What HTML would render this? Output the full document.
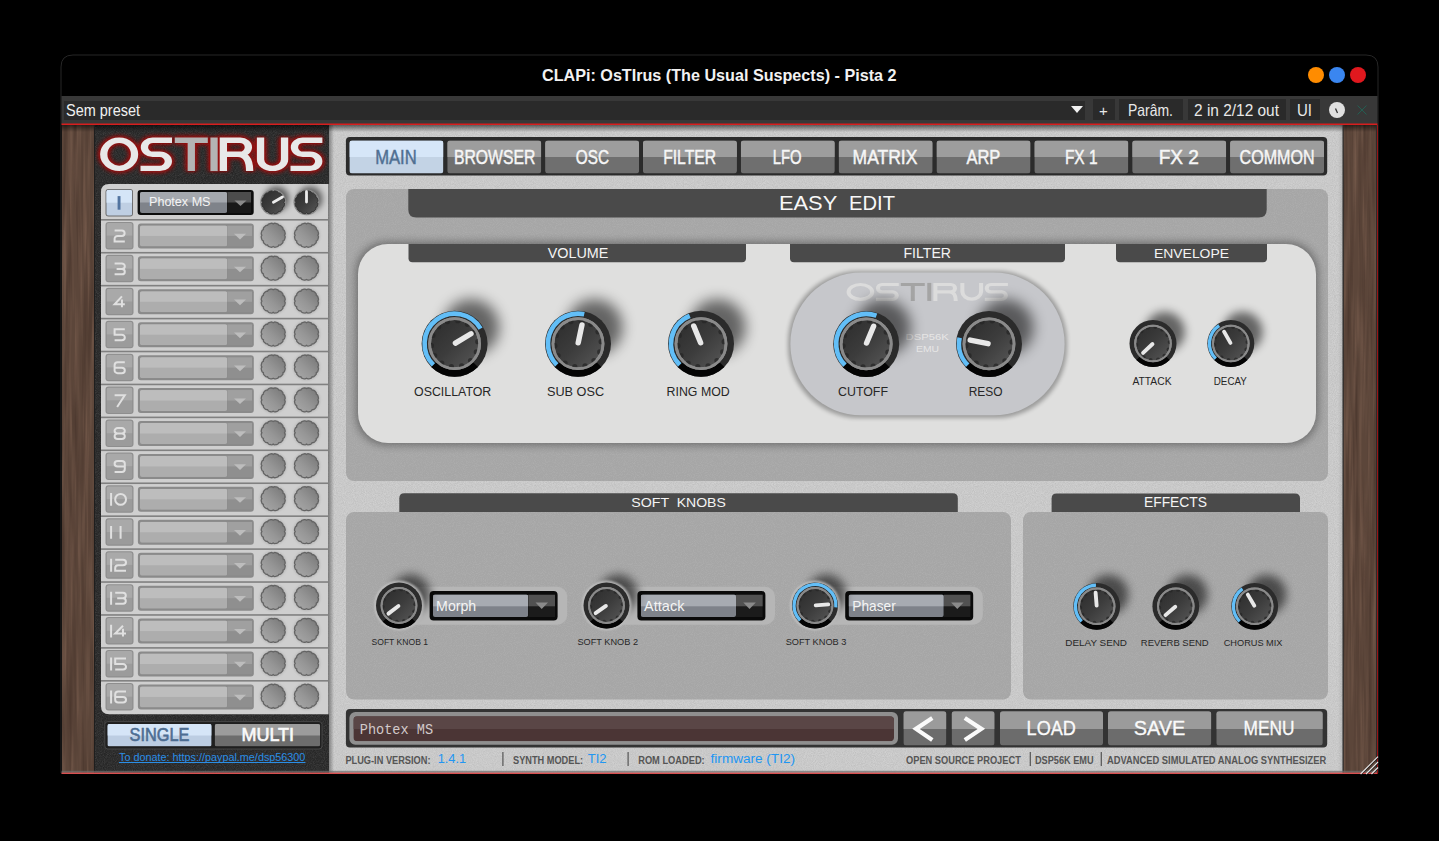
<!DOCTYPE html>
<html><head><meta charset="utf-8"><title>OsTIrus</title>
<style>html,body{margin:0;padding:0;background:#000;overflow:hidden}svg{display:block}</style>
</head><body>
<svg width="1439" height="841" viewBox="0 0 1439 841">
<defs>
<filter id="blur9" x="-100%" y="-100%" width="300%" height="300%"><feGaussianBlur stdDeviation="9"/></filter>
<filter id="blur8" x="-100%" y="-100%" width="300%" height="300%"><feGaussianBlur stdDeviation="8"/></filter>
<filter id="blur7" x="-100%" y="-100%" width="300%" height="300%"><feGaussianBlur stdDeviation="7"/></filter>
<filter id="blur5" x="-100%" y="-100%" width="300%" height="300%"><feGaussianBlur stdDeviation="5"/></filter>
<filter id="blur6" x="-100%" y="-100%" width="300%" height="300%"><feGaussianBlur stdDeviation="6"/></filter>
<filter id="blur4" x="-100%" y="-100%" width="300%" height="300%"><feGaussianBlur stdDeviation="4"/></filter>
<filter id="blur3" x="-100%" y="-100%" width="300%" height="300%"><feGaussianBlur stdDeviation="3"/></filter>
<filter id="blur2" x="-50%" y="-50%" width="200%" height="200%"><feGaussianBlur stdDeviation="2"/></filter>
<filter id="blur1" x="-50%" y="-50%" width="200%" height="200%"><feGaussianBlur stdDeviation="1"/></filter>
<filter id="blur15" x="-50%" y="-50%" width="200%" height="200%"><feGaussianBlur stdDeviation="1.5"/></filter>
<linearGradient id="face" x1="0" y1="0" x2="1" y2="1">
  <stop offset="0" stop-color="#2c2c2c"/><stop offset="0.5" stop-color="#3c3c3c"/><stop offset="1" stop-color="#585858"/>
</linearGradient>
<linearGradient id="topshade" x1="0" y1="0" x2="0" y2="1"><stop offset="0" stop-color="#000" stop-opacity="0.55"/><stop offset="1" stop-color="#000" stop-opacity="0"/></linearGradient>
<linearGradient id="leftshade" x1="0" y1="0" x2="1" y2="0"><stop offset="0" stop-color="#000" stop-opacity="0.35"/><stop offset="1" stop-color="#000" stop-opacity="0"/></linearGradient>
<linearGradient id="rightshade" x1="1" y1="0" x2="0" y2="0"><stop offset="0" stop-color="#000" stop-opacity="0.1"/><stop offset="1" stop-color="#000" stop-opacity="0"/></linearGradient>
<linearGradient id="faceG" x1="1" y1="0" x2="0" y2="1">
  <stop offset="0" stop-color="#747474"/><stop offset="0.55" stop-color="#969696"/><stop offset="1" stop-color="#aaaaaa"/>
</linearGradient>
<filter id="noise" x="0" y="0" width="100%" height="100%" color-interpolation-filters="sRGB"><feTurbulence type="fractalNoise" baseFrequency="1.1" numOctaves="1" seed="3"/><feColorMatrix type="matrix" values="0 0 0 0 0  0 0 0 0 0  0 0 0 0 0  1.8 0 0 0 -0.65"/></filter>
<filter id="noiseW" x="0" y="0" width="100%" height="100%" color-interpolation-filters="sRGB"><feTurbulence type="fractalNoise" baseFrequency="1.1" numOctaves="1" seed="5"/><feColorMatrix type="matrix" values="0 0 0 0 1  0 0 0 0 1  0 0 0 0 1  1.8 0 0 0 -0.75"/></filter>
<filter id="wood" x="0" y="0" width="100%" height="100%" color-interpolation-filters="sRGB"><feTurbulence type="fractalNoise" baseFrequency="0.22 0.008" numOctaves="3" seed="7"/><feColorMatrix type="matrix" values="0 0 0 0 0.24  0 0 0 0 0.17  0 0 0 0 0.14  1.3 0 0 0 -0.55"/></filter>
<filter id="woodL" x="0" y="0" width="100%" height="100%" color-interpolation-filters="sRGB"><feTurbulence type="fractalNoise" baseFrequency="0.3 0.01" numOctaves="2" seed="11"/><feColorMatrix type="matrix" values="0 0 0 0 0.47  0 0 0 0 0.36  0 0 0 0 0.30  1.9 0 0 0 -0.8"/></filter>
</defs>
<path d="M61,773 L61,67 Q61,55 73,55 L1366,55 Q1378,55 1378,67 L1378,773 Z" fill="#000" stroke="#262626" stroke-width="1"/>
<text x="542.0" y="80.6" font-family="Liberation Sans" font-size="16.57" font-weight="bold" fill="#f2f2f2" text-anchor="start" textLength="354.5" lengthAdjust="spacingAndGlyphs" >CLAPi: OsTIrus (The Usual Suspects) - Pista 2</text>
<circle cx="1316" cy="75" r="8" fill="#ff8c00"/>
<circle cx="1337" cy="75" r="8" fill="#3a86f0"/>
<circle cx="1358" cy="75" r="8" fill="#e0181e"/>
<rect x="61.50" y="96.00" width="1316.00" height="28.00" rx="0" fill="#383838" />
<rect x="64.00" y="101.00" width="1021.00" height="19.00" rx="0" fill="#2a2a2a" />
<text x="66.0" y="115.5" font-family="Liberation Sans" font-size="15.99" font-weight="normal" fill="#f0f0f0" text-anchor="start" textLength="74.0" lengthAdjust="spacingAndGlyphs" >Sem preset</text>
<path d="M1071,106 L1083,106 L1077,113 Z" fill="#f0f0f0"/>
<rect x="1093.00" y="99.00" width="22.00" height="21.00" rx="0" fill="#2a2a2a" />
<rect x="1119.00" y="99.00" width="64.00" height="21.00" rx="0" fill="#2a2a2a" />
<rect x="1188.00" y="99.00" width="98.00" height="21.00" rx="0" fill="#2a2a2a" />
<rect x="1290.00" y="99.00" width="30.00" height="21.00" rx="0" fill="#2a2a2a" />
<text x="1103.5" y="116.0" font-family="Liberation Sans" font-size="15.00" font-weight="normal" fill="#e8e8e8" text-anchor="middle" >+</text>
<text x="1128.0" y="115.5" font-family="Liberation Sans" font-size="16.72" font-weight="normal" fill="#e8e8e8" text-anchor="start" textLength="45.0" lengthAdjust="spacingAndGlyphs" >Parâm.</text>
<text x="1194.0" y="115.5" font-family="Liberation Sans" font-size="16.72" font-weight="normal" fill="#e8e8e8" text-anchor="start" textLength="85.0" lengthAdjust="spacingAndGlyphs" >2 in 2/12 out</text>
<text x="1297.0" y="115.5" font-family="Liberation Sans" font-size="16.72" font-weight="normal" fill="#e8e8e8" text-anchor="start" textLength="15.0" lengthAdjust="spacingAndGlyphs" >UI</text>
<circle cx="1337" cy="110" r="8" fill="#e0e0e0"/>
<path d="M1335.5,108.5 L1337.5,113" stroke="#333" stroke-width="1.3"/>
<path d="M1357.5,105.5 L1366.5,114.5 M1366.5,105.5 L1357.5,114.5" stroke="#235e52" stroke-width="1"/>
<rect x="61.50" y="123.50" width="1316.00" height="1.50" rx="0" fill="#d81e1e" />
<rect x="62.00" y="125.00" width="1315.00" height="648.00" rx="0" fill="#cbcbcb" />
<rect x="330.00" y="125.00" width="1013.00" height="648.00" rx="0" fill="#000" filter="url(#noise)" opacity="0.07"/>
<rect x="330.00" y="125.00" width="1013.00" height="648.00" rx="0" fill="#fff" filter="url(#noiseW)" opacity="0.2"/>
<rect x="62.00" y="125.00" width="34.00" height="648.00" rx="0" fill="#5c463a" />
<rect x="62.00" y="125.00" width="34.00" height="648.00" rx="0" fill="#000" filter="url(#woodL)"/>
<rect x="62.00" y="125.00" width="34.00" height="648.00" rx="0" fill="#000" filter="url(#wood)"/>
<rect x="1343.00" y="125.00" width="34.00" height="648.00" rx="0" fill="#5c463a" />
<rect x="1343.00" y="125.00" width="34.00" height="648.00" rx="0" fill="#000" filter="url(#woodL)"/>
<rect x="1343.00" y="125.00" width="34.00" height="648.00" rx="0" fill="#000" filter="url(#wood)"/>
<rect x="94.50" y="125.00" width="234.50" height="648.00" rx="0" fill="#2e2e2e" />
<rect x="94.50" y="125.00" width="234.50" height="648.00" rx="0" fill="#000" filter="url(#noise)" opacity="0.3"/>
<rect x="94.50" y="125.00" width="234.50" height="648.00" rx="0" fill="#fff" filter="url(#noiseW)" opacity="0.12"/>
<rect x="62" y="125" width="1315" height="7" fill="url(#topshade)"/>
<rect x="329" y="125" width="5" height="648" fill="url(#leftshade)"/>
<rect x="1338" y="125" width="5" height="648" fill="url(#rightshade)"/>
<g filter="url(#blur2)" opacity="0.85"><g transform="translate(0,137.50) scale(1,0.74)" stroke="#b01010" stroke-width="11.8" fill="none"><ellipse cx="119.15" cy="22.70" rx="15.40" ry="19.05"/><path d="M172.00,3.65 H152.72 A8.57,9.53 0 0 0 152.72,22.70 H159.78 A8.57,9.53 0 0 1 159.78,41.76 H140.50"/><path d="M223.35,45.41 V3.65 H240.08 A8.57,9.53 0 0 1 240.08,22.70 H223.35 M238.08,22.70 Q249.65,22.70 249.65,45.41"/><path d="M260.55,0.00 V29.76 A12.00,12.00 0 0 0 284.55,29.76 V0.00"/><path d="M322.40,3.65 H302.72 A8.57,9.53 0 0 0 302.72,22.70 H310.18 A8.57,9.53 0 0 1 310.18,41.76 H290.50"/><path d="M174.80,3.65 H207.80 M191.30,0.00 V45.41"/><path d="M214.05,0.00 V45.41"/></g></g>
<g filter="url(#blur1)" opacity="0.85"><g transform="translate(0,137.50) scale(1,0.74)" stroke="#900d0d" stroke-width="8.9" fill="none"><ellipse cx="119.15" cy="22.70" rx="15.40" ry="19.05"/><path d="M172.00,3.65 H152.72 A8.57,9.53 0 0 0 152.72,22.70 H159.78 A8.57,9.53 0 0 1 159.78,41.76 H140.50"/><path d="M223.35,45.41 V3.65 H240.08 A8.57,9.53 0 0 1 240.08,22.70 H223.35 M238.08,22.70 Q249.65,22.70 249.65,45.41"/><path d="M260.55,0.00 V29.76 A12.00,12.00 0 0 0 284.55,29.76 V0.00"/><path d="M322.40,3.65 H302.72 A8.57,9.53 0 0 0 302.72,22.70 H310.18 A8.57,9.53 0 0 1 310.18,41.76 H290.50"/><path d="M174.80,3.65 H207.80 M191.30,0.00 V45.41"/><path d="M214.05,0.00 V45.41"/></g></g>
<g transform="translate(0,137.50) scale(1,0.74)" stroke="#e8e8e8" stroke-width="7.3" fill="none"><ellipse cx="119.15" cy="22.70" rx="15.40" ry="19.05"/><path d="M172.00,3.65 H152.72 A8.57,9.53 0 0 0 152.72,22.70 H159.78 A8.57,9.53 0 0 1 159.78,41.76 H140.50"/><path d="M223.35,45.41 V3.65 H240.08 A8.57,9.53 0 0 1 240.08,22.70 H223.35 M238.08,22.70 Q249.65,22.70 249.65,45.41"/><path d="M260.55,0.00 V29.76 A12.00,12.00 0 0 0 284.55,29.76 V0.00"/><path d="M322.40,3.65 H302.72 A8.57,9.53 0 0 0 302.72,22.70 H310.18 A8.57,9.53 0 0 1 310.18,41.76 H290.50"/></g>
<g transform="translate(0,137.50) scale(1,0.74)" stroke="#b4b4b4" stroke-width="7.3" fill="none"><path d="M174.80,3.65 H207.80 M191.30,0.00 V45.41"/><path d="M214.05,0.00 V45.41"/></g>
<path d="M109,184 H328.5 V714.3 H109 Q101,714.3 101,706.3 V192 Q101,184 109,184 Z" fill="#cfcfcf"/>
<rect x="101.00" y="219.00" width="228.00" height="1.60" rx="0" fill="#808080" />
<rect x="105.50" y="189.00" width="27.50" height="27.50" rx="3" fill="#6a6a6a" />
<clipPath id="c1063_1898"><rect x="106.30" y="189.80" width="25.90" height="25.90" rx="2.5"/></clipPath><g clip-path="url(#c1063_1898)" ><rect x="106.30" y="189.80" width="25.90" height="25.90" fill="#bfcfe3"/><rect x="106.30" y="189.80" width="25.90" height="12.90" fill="#d5e5f7"/></g>
<rect x="117.60" y="196.10" width="2.90" height="13.60" rx="0" fill="#5274a0" />
<rect x="137.60" y="190.00" width="116.10" height="25.00" rx="3" fill="#0c0c0c" />
<clipPath id="c1400_1920"><rect x="140.00" y="192.00" width="87.20" height="21.00" rx="2"/></clipPath><g clip-path="url(#c1400_1920)" ><rect x="140.00" y="192.00" width="87.20" height="21.00" fill="#7f838a"/><rect x="140.00" y="192.00" width="87.20" height="10.50" fill="#a4a8ae"/></g>
<clipPath id="c2272_1920"><rect x="227.20" y="192.00" width="24.00" height="21.00" rx="0"/></clipPath><g clip-path="url(#c2272_1920)" ><rect x="227.20" y="192.00" width="24.00" height="21.00" fill="#191919"/><rect x="227.20" y="192.00" width="24.00" height="10.50" fill="#4c4c4c"/></g>
<path d="M234.5,200.5 H246.5 L240.5,206.0 Z" fill="#8a8a8a"/>
<text x="149.0" y="205.5" font-family="Liberation Sans" font-size="13.08" font-weight="normal" fill="#f4f4f4" text-anchor="start" textLength="61.5" lengthAdjust="spacingAndGlyphs" >Photex MS</text>
<circle cx="276.70" cy="198.80" r="12.40" fill="#000" opacity="0.55" filter="url(#blur3)"/>
<circle cx="273.2" cy="202.3" r="13.00" fill="#8a8a8a"/>
<path d="M273.20,191.80 L273.93,191.18 L274.70,190.90 L275.44,191.02 L276.18,191.19 L276.90,191.41 L277.60,191.68 L278.13,192.30 L278.45,193.21 L279.39,193.03 L280.20,193.18 L280.78,193.65 L281.33,194.17 L281.85,194.72 L282.32,195.30 L282.47,196.11 L282.29,197.05 L283.20,197.37 L283.82,197.90 L284.09,198.60 L284.31,199.32 L284.48,200.06 L284.60,200.80 L284.32,201.57 L283.70,202.30 L284.32,203.03 L284.60,203.80 L284.48,204.54 L284.31,205.28 L284.09,206.00 L283.82,206.70 L283.20,207.23 L282.29,207.55 L282.47,208.49 L282.32,209.30 L281.85,209.88 L281.33,210.43 L280.78,210.95 L280.20,211.42 L279.39,211.57 L278.45,211.39 L278.13,212.30 L277.60,212.92 L276.90,213.19 L276.18,213.41 L275.44,213.58 L274.70,213.70 L273.93,213.42 L273.20,212.80 L272.47,213.42 L271.70,213.70 L270.96,213.58 L270.22,213.41 L269.50,213.19 L268.80,212.92 L268.27,212.30 L267.95,211.39 L267.01,211.57 L266.20,211.42 L265.62,210.95 L265.07,210.43 L264.55,209.88 L264.08,209.30 L263.93,208.49 L264.11,207.55 L263.20,207.23 L262.58,206.70 L262.31,206.00 L262.09,205.28 L261.92,204.54 L261.80,203.80 L262.08,203.03 L262.70,202.30 L262.08,201.57 L261.80,200.80 L261.92,200.06 L262.09,199.32 L262.31,198.60 L262.58,197.90 L263.20,197.37 L264.11,197.05 L263.93,196.11 L264.08,195.30 L264.55,194.72 L265.07,194.17 L265.62,193.65 L266.20,193.18 L267.01,193.03 L267.95,193.21 L268.27,192.30 L268.80,191.68 L269.50,191.41 L270.22,191.19 L270.96,191.02 L271.70,190.90 L272.47,191.18 Z" fill="url(#face)" stroke="#2e2e2e" stroke-width="1"/>
<path d="M273.41,202.18 L282.44,196.97" stroke="#ececec" stroke-width="2.8" stroke-linecap="round"/>
<circle cx="310.00" cy="198.80" r="12.40" fill="#000" opacity="0.55" filter="url(#blur3)"/>
<circle cx="306.5" cy="202.3" r="13.00" fill="#8a8a8a"/>
<path d="M306.50,191.80 L307.23,191.18 L308.00,190.90 L308.74,191.02 L309.48,191.19 L310.20,191.41 L310.90,191.68 L311.43,192.30 L311.75,193.21 L312.69,193.03 L313.50,193.18 L314.08,193.65 L314.63,194.17 L315.15,194.72 L315.62,195.30 L315.77,196.11 L315.59,197.05 L316.50,197.37 L317.12,197.90 L317.39,198.60 L317.61,199.32 L317.78,200.06 L317.90,200.80 L317.62,201.57 L317.00,202.30 L317.62,203.03 L317.90,203.80 L317.78,204.54 L317.61,205.28 L317.39,206.00 L317.12,206.70 L316.50,207.23 L315.59,207.55 L315.77,208.49 L315.62,209.30 L315.15,209.88 L314.63,210.43 L314.08,210.95 L313.50,211.42 L312.69,211.57 L311.75,211.39 L311.43,212.30 L310.90,212.92 L310.20,213.19 L309.48,213.41 L308.74,213.58 L308.00,213.70 L307.23,213.42 L306.50,212.80 L305.77,213.42 L305.00,213.70 L304.26,213.58 L303.52,213.41 L302.80,213.19 L302.10,212.92 L301.57,212.30 L301.25,211.39 L300.31,211.57 L299.50,211.42 L298.92,210.95 L298.37,210.43 L297.85,209.88 L297.38,209.30 L297.23,208.49 L297.41,207.55 L296.50,207.23 L295.88,206.70 L295.61,206.00 L295.39,205.28 L295.22,204.54 L295.10,203.80 L295.38,203.03 L296.00,202.30 L295.38,201.57 L295.10,200.80 L295.22,200.06 L295.39,199.32 L295.61,198.60 L295.88,197.90 L296.50,197.37 L297.41,197.05 L297.23,196.11 L297.38,195.30 L297.85,194.72 L298.37,194.17 L298.92,193.65 L299.50,193.18 L300.31,193.03 L301.25,193.21 L301.57,192.30 L302.10,191.68 L302.80,191.41 L303.52,191.19 L304.26,191.02 L305.00,190.90 L305.77,191.18 Z" fill="url(#face)" stroke="#2e2e2e" stroke-width="1"/>
<path d="M306.50,202.05 L306.50,191.64" stroke="#ececec" stroke-width="2.8" stroke-linecap="round"/>
<rect x="101.00" y="251.93" width="228.00" height="1.60" rx="0" fill="#808080" />
<rect x="105.50" y="221.93" width="28.00" height="27.50" rx="3" fill="#8e8e8e" />
<clipPath id="c1065_2229"><rect x="106.50" y="222.93" width="26.00" height="25.50" rx="2.5"/></clipPath><g clip-path="url(#c1065_2229)" ><rect x="106.50" y="222.93" width="26.00" height="25.50" fill="#9b9b9b"/><rect x="106.50" y="222.93" width="26.00" height="12.70" fill="#a9a9a9"/></g>
<path d="M114.60,230.53 H121.80 A3.00,2.73 0 0 1 121.80,235.98 H117.60 A3.00,2.73 0 0 0 114.60,238.71 V241.43 H124.80" stroke="#e0e0e0" stroke-width="2" fill="none"/>
<rect x="137.90" y="223.43" width="115.90" height="25.00" rx="3" fill="#8a8a8a" />
<clipPath id="c1400_2254"><rect x="140.00" y="225.43" width="87.20" height="21.00" rx="2"/></clipPath><g clip-path="url(#c1400_2254)" ><rect x="140.00" y="225.43" width="87.20" height="21.00" fill="#adadad"/><rect x="140.00" y="225.43" width="87.20" height="10.50" fill="#bdbdbd"/></g>
<clipPath id="c2272_2254"><rect x="227.20" y="225.43" width="24.80" height="21.00" rx="0"/></clipPath><g clip-path="url(#c2272_2254)" ><rect x="227.20" y="225.43" width="24.80" height="21.00" fill="#8f8f8f"/><rect x="227.20" y="225.43" width="24.80" height="10.50" fill="#a0a0a0"/></g>
<path d="M234,233.73000000000002 H246 L240,239.43 Z" fill="#bdbdbd"/>
<circle cx="273.2" cy="235.23000000000002" r="13.60" fill="#b9b9b9" filter="url(#blur1)"/>
<path d="M273.20,223.93 L273.97,223.44 L274.78,223.23 L275.56,223.36 L276.33,223.54 L277.09,223.77 L277.83,224.05 L278.43,224.63 L278.85,225.44 L279.77,225.40 L280.57,225.63 L281.18,226.13 L281.76,226.67 L282.30,227.25 L282.80,227.86 L283.03,228.66 L282.99,229.58 L283.80,230.00 L284.38,230.60 L284.66,231.34 L284.89,232.10 L285.07,232.87 L285.20,233.65 L284.99,234.46 L284.50,235.23 L284.99,236.00 L285.20,236.81 L285.07,237.59 L284.89,238.36 L284.66,239.12 L284.38,239.86 L283.80,240.46 L282.99,240.88 L283.03,241.80 L282.80,242.60 L282.30,243.21 L281.76,243.79 L281.18,244.33 L280.57,244.83 L279.77,245.06 L278.85,245.02 L278.43,245.83 L277.83,246.41 L277.09,246.69 L276.33,246.92 L275.56,247.10 L274.78,247.23 L273.97,247.02 L273.20,246.53 L272.43,247.02 L271.62,247.23 L270.84,247.10 L270.07,246.92 L269.31,246.69 L268.57,246.41 L267.97,245.83 L267.55,245.02 L266.63,245.06 L265.83,244.83 L265.22,244.33 L264.64,243.79 L264.10,243.21 L263.60,242.60 L263.37,241.80 L263.41,240.88 L262.60,240.46 L262.02,239.86 L261.74,239.12 L261.51,238.36 L261.33,237.59 L261.20,236.81 L261.41,236.00 L261.90,235.23 L261.41,234.46 L261.20,233.65 L261.33,232.87 L261.51,232.10 L261.74,231.34 L262.02,230.60 L262.60,230.00 L263.41,229.58 L263.37,228.66 L263.60,227.86 L264.10,227.25 L264.64,226.67 L265.22,226.13 L265.83,225.63 L266.63,225.40 L267.55,225.44 L267.97,224.63 L268.57,224.05 L269.31,223.77 L270.07,223.54 L270.84,223.36 L271.62,223.23 L272.43,223.44 Z" fill="url(#faceG)" stroke="#646464" stroke-width="1.3"/>
<circle cx="306.5" cy="235.23000000000002" r="13.60" fill="#b9b9b9" filter="url(#blur1)"/>
<path d="M306.50,223.93 L307.27,223.44 L308.08,223.23 L308.86,223.36 L309.63,223.54 L310.39,223.77 L311.13,224.05 L311.73,224.63 L312.15,225.44 L313.07,225.40 L313.87,225.63 L314.48,226.13 L315.06,226.67 L315.60,227.25 L316.10,227.86 L316.33,228.66 L316.29,229.58 L317.10,230.00 L317.68,230.60 L317.96,231.34 L318.19,232.10 L318.37,232.87 L318.50,233.65 L318.29,234.46 L317.80,235.23 L318.29,236.00 L318.50,236.81 L318.37,237.59 L318.19,238.36 L317.96,239.12 L317.68,239.86 L317.10,240.46 L316.29,240.88 L316.33,241.80 L316.10,242.60 L315.60,243.21 L315.06,243.79 L314.48,244.33 L313.87,244.83 L313.07,245.06 L312.15,245.02 L311.73,245.83 L311.13,246.41 L310.39,246.69 L309.63,246.92 L308.86,247.10 L308.08,247.23 L307.27,247.02 L306.50,246.53 L305.73,247.02 L304.92,247.23 L304.14,247.10 L303.37,246.92 L302.61,246.69 L301.87,246.41 L301.27,245.83 L300.85,245.02 L299.93,245.06 L299.13,244.83 L298.52,244.33 L297.94,243.79 L297.40,243.21 L296.90,242.60 L296.67,241.80 L296.71,240.88 L295.90,240.46 L295.32,239.86 L295.04,239.12 L294.81,238.36 L294.63,237.59 L294.50,236.81 L294.71,236.00 L295.20,235.23 L294.71,234.46 L294.50,233.65 L294.63,232.87 L294.81,232.10 L295.04,231.34 L295.32,230.60 L295.90,230.00 L296.71,229.58 L296.67,228.66 L296.90,227.86 L297.40,227.25 L297.94,226.67 L298.52,226.13 L299.13,225.63 L299.93,225.40 L300.85,225.44 L301.27,224.63 L301.87,224.05 L302.61,223.77 L303.37,223.54 L304.14,223.36 L304.92,223.23 L305.73,223.44 Z" fill="url(#faceG)" stroke="#646464" stroke-width="1.3"/>
<rect x="101.00" y="284.86" width="228.00" height="1.60" rx="0" fill="#808080" />
<rect x="105.50" y="254.86" width="28.00" height="27.50" rx="3" fill="#8e8e8e" />
<clipPath id="c1065_2558"><rect x="106.50" y="255.86" width="26.00" height="25.50" rx="2.5"/></clipPath><g clip-path="url(#c1065_2558)" ><rect x="106.50" y="255.86" width="26.00" height="25.50" fill="#9b9b9b"/><rect x="106.50" y="255.86" width="26.00" height="12.70" fill="#a9a9a9"/></g>
<path d="M114.60,263.46 H121.80 A3.00,2.72 0 0 1 121.80,268.91 H116.60 M121.80,268.91 A3.00,2.72 0 0 1 121.80,274.36 H114.60" stroke="#e0e0e0" stroke-width="2" fill="none"/>
<rect x="137.90" y="256.36" width="115.90" height="25.00" rx="3" fill="#8a8a8a" />
<clipPath id="c1400_2583"><rect x="140.00" y="258.36" width="87.20" height="21.00" rx="2"/></clipPath><g clip-path="url(#c1400_2583)" ><rect x="140.00" y="258.36" width="87.20" height="21.00" fill="#adadad"/><rect x="140.00" y="258.36" width="87.20" height="10.50" fill="#bdbdbd"/></g>
<clipPath id="c2272_2583"><rect x="227.20" y="258.36" width="24.80" height="21.00" rx="0"/></clipPath><g clip-path="url(#c2272_2583)" ><rect x="227.20" y="258.36" width="24.80" height="21.00" fill="#8f8f8f"/><rect x="227.20" y="258.36" width="24.80" height="10.50" fill="#a0a0a0"/></g>
<path d="M234,266.66 H246 L240,272.36 Z" fill="#bdbdbd"/>
<circle cx="273.2" cy="268.16" r="13.60" fill="#b9b9b9" filter="url(#blur1)"/>
<path d="M273.20,256.86 L273.97,256.37 L274.78,256.16 L275.56,256.29 L276.33,256.47 L277.09,256.70 L277.83,256.98 L278.43,257.56 L278.85,258.37 L279.77,258.33 L280.57,258.56 L281.18,259.06 L281.76,259.60 L282.30,260.18 L282.80,260.79 L283.03,261.59 L282.99,262.51 L283.80,262.93 L284.38,263.53 L284.66,264.27 L284.89,265.03 L285.07,265.80 L285.20,266.58 L284.99,267.39 L284.50,268.16 L284.99,268.93 L285.20,269.74 L285.07,270.52 L284.89,271.29 L284.66,272.05 L284.38,272.79 L283.80,273.39 L282.99,273.81 L283.03,274.73 L282.80,275.53 L282.30,276.14 L281.76,276.72 L281.18,277.26 L280.57,277.76 L279.77,277.99 L278.85,277.95 L278.43,278.76 L277.83,279.34 L277.09,279.62 L276.33,279.85 L275.56,280.03 L274.78,280.16 L273.97,279.95 L273.20,279.46 L272.43,279.95 L271.62,280.16 L270.84,280.03 L270.07,279.85 L269.31,279.62 L268.57,279.34 L267.97,278.76 L267.55,277.95 L266.63,277.99 L265.83,277.76 L265.22,277.26 L264.64,276.72 L264.10,276.14 L263.60,275.53 L263.37,274.73 L263.41,273.81 L262.60,273.39 L262.02,272.79 L261.74,272.05 L261.51,271.29 L261.33,270.52 L261.20,269.74 L261.41,268.93 L261.90,268.16 L261.41,267.39 L261.20,266.58 L261.33,265.80 L261.51,265.03 L261.74,264.27 L262.02,263.53 L262.60,262.93 L263.41,262.51 L263.37,261.59 L263.60,260.79 L264.10,260.18 L264.64,259.60 L265.22,259.06 L265.83,258.56 L266.63,258.33 L267.55,258.37 L267.97,257.56 L268.57,256.98 L269.31,256.70 L270.07,256.47 L270.84,256.29 L271.62,256.16 L272.43,256.37 Z" fill="url(#faceG)" stroke="#646464" stroke-width="1.3"/>
<circle cx="306.5" cy="268.16" r="13.60" fill="#b9b9b9" filter="url(#blur1)"/>
<path d="M306.50,256.86 L307.27,256.37 L308.08,256.16 L308.86,256.29 L309.63,256.47 L310.39,256.70 L311.13,256.98 L311.73,257.56 L312.15,258.37 L313.07,258.33 L313.87,258.56 L314.48,259.06 L315.06,259.60 L315.60,260.18 L316.10,260.79 L316.33,261.59 L316.29,262.51 L317.10,262.93 L317.68,263.53 L317.96,264.27 L318.19,265.03 L318.37,265.80 L318.50,266.58 L318.29,267.39 L317.80,268.16 L318.29,268.93 L318.50,269.74 L318.37,270.52 L318.19,271.29 L317.96,272.05 L317.68,272.79 L317.10,273.39 L316.29,273.81 L316.33,274.73 L316.10,275.53 L315.60,276.14 L315.06,276.72 L314.48,277.26 L313.87,277.76 L313.07,277.99 L312.15,277.95 L311.73,278.76 L311.13,279.34 L310.39,279.62 L309.63,279.85 L308.86,280.03 L308.08,280.16 L307.27,279.95 L306.50,279.46 L305.73,279.95 L304.92,280.16 L304.14,280.03 L303.37,279.85 L302.61,279.62 L301.87,279.34 L301.27,278.76 L300.85,277.95 L299.93,277.99 L299.13,277.76 L298.52,277.26 L297.94,276.72 L297.40,276.14 L296.90,275.53 L296.67,274.73 L296.71,273.81 L295.90,273.39 L295.32,272.79 L295.04,272.05 L294.81,271.29 L294.63,270.52 L294.50,269.74 L294.71,268.93 L295.20,268.16 L294.71,267.39 L294.50,266.58 L294.63,265.80 L294.81,265.03 L295.04,264.27 L295.32,263.53 L295.90,262.93 L296.71,262.51 L296.67,261.59 L296.90,260.79 L297.40,260.18 L297.94,259.60 L298.52,259.06 L299.13,258.56 L299.93,258.33 L300.85,258.37 L301.27,257.56 L301.87,256.98 L302.61,256.70 L303.37,256.47 L304.14,256.29 L304.92,256.16 L305.73,256.37 Z" fill="url(#faceG)" stroke="#646464" stroke-width="1.3"/>
<rect x="101.00" y="317.79" width="228.00" height="1.60" rx="0" fill="#808080" />
<rect x="105.50" y="287.79" width="28.00" height="27.50" rx="3" fill="#8e8e8e" />
<clipPath id="c1065_2887"><rect x="106.50" y="288.79" width="26.00" height="25.50" rx="2.5"/></clipPath><g clip-path="url(#c1065_2887)" ><rect x="106.50" y="288.79" width="26.00" height="25.50" fill="#9b9b9b"/><rect x="106.50" y="288.79" width="26.00" height="12.70" fill="#a9a9a9"/></g>
<path d="M121.94,296.39 L114.60,304.29 H124.80 M121.94,299.39 V307.29" stroke="#e0e0e0" stroke-width="2" fill="none"/>
<rect x="137.90" y="289.29" width="115.90" height="25.00" rx="3" fill="#8a8a8a" />
<clipPath id="c1400_2912"><rect x="140.00" y="291.29" width="87.20" height="21.00" rx="2"/></clipPath><g clip-path="url(#c1400_2912)" ><rect x="140.00" y="291.29" width="87.20" height="21.00" fill="#adadad"/><rect x="140.00" y="291.29" width="87.20" height="10.50" fill="#bdbdbd"/></g>
<clipPath id="c2272_2912"><rect x="227.20" y="291.29" width="24.80" height="21.00" rx="0"/></clipPath><g clip-path="url(#c2272_2912)" ><rect x="227.20" y="291.29" width="24.80" height="21.00" fill="#8f8f8f"/><rect x="227.20" y="291.29" width="24.80" height="10.50" fill="#a0a0a0"/></g>
<path d="M234,299.59 H246 L240,305.28999999999996 Z" fill="#bdbdbd"/>
<circle cx="273.2" cy="301.09" r="13.60" fill="#b9b9b9" filter="url(#blur1)"/>
<path d="M273.20,289.79 L273.97,289.30 L274.78,289.09 L275.56,289.22 L276.33,289.40 L277.09,289.63 L277.83,289.91 L278.43,290.49 L278.85,291.30 L279.77,291.26 L280.57,291.49 L281.18,291.99 L281.76,292.53 L282.30,293.11 L282.80,293.72 L283.03,294.52 L282.99,295.44 L283.80,295.86 L284.38,296.46 L284.66,297.20 L284.89,297.96 L285.07,298.73 L285.20,299.51 L284.99,300.32 L284.50,301.09 L284.99,301.86 L285.20,302.67 L285.07,303.45 L284.89,304.22 L284.66,304.98 L284.38,305.72 L283.80,306.32 L282.99,306.74 L283.03,307.66 L282.80,308.46 L282.30,309.07 L281.76,309.65 L281.18,310.19 L280.57,310.69 L279.77,310.92 L278.85,310.88 L278.43,311.69 L277.83,312.27 L277.09,312.55 L276.33,312.78 L275.56,312.96 L274.78,313.09 L273.97,312.88 L273.20,312.39 L272.43,312.88 L271.62,313.09 L270.84,312.96 L270.07,312.78 L269.31,312.55 L268.57,312.27 L267.97,311.69 L267.55,310.88 L266.63,310.92 L265.83,310.69 L265.22,310.19 L264.64,309.65 L264.10,309.07 L263.60,308.46 L263.37,307.66 L263.41,306.74 L262.60,306.32 L262.02,305.72 L261.74,304.98 L261.51,304.22 L261.33,303.45 L261.20,302.67 L261.41,301.86 L261.90,301.09 L261.41,300.32 L261.20,299.51 L261.33,298.73 L261.51,297.96 L261.74,297.20 L262.02,296.46 L262.60,295.86 L263.41,295.44 L263.37,294.52 L263.60,293.72 L264.10,293.11 L264.64,292.53 L265.22,291.99 L265.83,291.49 L266.63,291.26 L267.55,291.30 L267.97,290.49 L268.57,289.91 L269.31,289.63 L270.07,289.40 L270.84,289.22 L271.62,289.09 L272.43,289.30 Z" fill="url(#faceG)" stroke="#646464" stroke-width="1.3"/>
<circle cx="306.5" cy="301.09" r="13.60" fill="#b9b9b9" filter="url(#blur1)"/>
<path d="M306.50,289.79 L307.27,289.30 L308.08,289.09 L308.86,289.22 L309.63,289.40 L310.39,289.63 L311.13,289.91 L311.73,290.49 L312.15,291.30 L313.07,291.26 L313.87,291.49 L314.48,291.99 L315.06,292.53 L315.60,293.11 L316.10,293.72 L316.33,294.52 L316.29,295.44 L317.10,295.86 L317.68,296.46 L317.96,297.20 L318.19,297.96 L318.37,298.73 L318.50,299.51 L318.29,300.32 L317.80,301.09 L318.29,301.86 L318.50,302.67 L318.37,303.45 L318.19,304.22 L317.96,304.98 L317.68,305.72 L317.10,306.32 L316.29,306.74 L316.33,307.66 L316.10,308.46 L315.60,309.07 L315.06,309.65 L314.48,310.19 L313.87,310.69 L313.07,310.92 L312.15,310.88 L311.73,311.69 L311.13,312.27 L310.39,312.55 L309.63,312.78 L308.86,312.96 L308.08,313.09 L307.27,312.88 L306.50,312.39 L305.73,312.88 L304.92,313.09 L304.14,312.96 L303.37,312.78 L302.61,312.55 L301.87,312.27 L301.27,311.69 L300.85,310.88 L299.93,310.92 L299.13,310.69 L298.52,310.19 L297.94,309.65 L297.40,309.07 L296.90,308.46 L296.67,307.66 L296.71,306.74 L295.90,306.32 L295.32,305.72 L295.04,304.98 L294.81,304.22 L294.63,303.45 L294.50,302.67 L294.71,301.86 L295.20,301.09 L294.71,300.32 L294.50,299.51 L294.63,298.73 L294.81,297.96 L295.04,297.20 L295.32,296.46 L295.90,295.86 L296.71,295.44 L296.67,294.52 L296.90,293.72 L297.40,293.11 L297.94,292.53 L298.52,291.99 L299.13,291.49 L299.93,291.26 L300.85,291.30 L301.27,290.49 L301.87,289.91 L302.61,289.63 L303.37,289.40 L304.14,289.22 L304.92,289.09 L305.73,289.30 Z" fill="url(#faceG)" stroke="#646464" stroke-width="1.3"/>
<rect x="101.00" y="350.72" width="228.00" height="1.60" rx="0" fill="#808080" />
<rect x="105.50" y="320.72" width="28.00" height="27.50" rx="3" fill="#8e8e8e" />
<clipPath id="c1065_3217"><rect x="106.50" y="321.72" width="26.00" height="25.50" rx="2.5"/></clipPath><g clip-path="url(#c1065_3217)" ><rect x="106.50" y="321.72" width="26.00" height="25.50" fill="#9b9b9b"/><rect x="106.50" y="321.72" width="26.00" height="12.70" fill="#a9a9a9"/></g>
<path d="M124.80,329.32 H114.60 V334.77 H121.80 A3.00,2.72 0 0 1 121.80,340.22 H114.60" stroke="#e0e0e0" stroke-width="2" fill="none"/>
<rect x="137.90" y="322.22" width="115.90" height="25.00" rx="3" fill="#8a8a8a" />
<clipPath id="c1400_3242"><rect x="140.00" y="324.22" width="87.20" height="21.00" rx="2"/></clipPath><g clip-path="url(#c1400_3242)" ><rect x="140.00" y="324.22" width="87.20" height="21.00" fill="#adadad"/><rect x="140.00" y="324.22" width="87.20" height="10.50" fill="#bdbdbd"/></g>
<clipPath id="c2272_3242"><rect x="227.20" y="324.22" width="24.80" height="21.00" rx="0"/></clipPath><g clip-path="url(#c2272_3242)" ><rect x="227.20" y="324.22" width="24.80" height="21.00" fill="#8f8f8f"/><rect x="227.20" y="324.22" width="24.80" height="10.50" fill="#a0a0a0"/></g>
<path d="M234,332.52000000000004 H246 L240,338.22 Z" fill="#bdbdbd"/>
<circle cx="273.2" cy="334.02000000000004" r="13.60" fill="#b9b9b9" filter="url(#blur1)"/>
<path d="M273.20,322.72 L273.97,322.23 L274.78,322.02 L275.56,322.15 L276.33,322.33 L277.09,322.56 L277.83,322.84 L278.43,323.42 L278.85,324.23 L279.77,324.19 L280.57,324.42 L281.18,324.92 L281.76,325.46 L282.30,326.04 L282.80,326.65 L283.03,327.45 L282.99,328.37 L283.80,328.79 L284.38,329.39 L284.66,330.13 L284.89,330.89 L285.07,331.66 L285.20,332.44 L284.99,333.25 L284.50,334.02 L284.99,334.79 L285.20,335.60 L285.07,336.38 L284.89,337.15 L284.66,337.91 L284.38,338.65 L283.80,339.25 L282.99,339.67 L283.03,340.59 L282.80,341.39 L282.30,342.00 L281.76,342.58 L281.18,343.12 L280.57,343.62 L279.77,343.85 L278.85,343.81 L278.43,344.62 L277.83,345.20 L277.09,345.48 L276.33,345.71 L275.56,345.89 L274.78,346.02 L273.97,345.81 L273.20,345.32 L272.43,345.81 L271.62,346.02 L270.84,345.89 L270.07,345.71 L269.31,345.48 L268.57,345.20 L267.97,344.62 L267.55,343.81 L266.63,343.85 L265.83,343.62 L265.22,343.12 L264.64,342.58 L264.10,342.00 L263.60,341.39 L263.37,340.59 L263.41,339.67 L262.60,339.25 L262.02,338.65 L261.74,337.91 L261.51,337.15 L261.33,336.38 L261.20,335.60 L261.41,334.79 L261.90,334.02 L261.41,333.25 L261.20,332.44 L261.33,331.66 L261.51,330.89 L261.74,330.13 L262.02,329.39 L262.60,328.79 L263.41,328.37 L263.37,327.45 L263.60,326.65 L264.10,326.04 L264.64,325.46 L265.22,324.92 L265.83,324.42 L266.63,324.19 L267.55,324.23 L267.97,323.42 L268.57,322.84 L269.31,322.56 L270.07,322.33 L270.84,322.15 L271.62,322.02 L272.43,322.23 Z" fill="url(#faceG)" stroke="#646464" stroke-width="1.3"/>
<circle cx="306.5" cy="334.02000000000004" r="13.60" fill="#b9b9b9" filter="url(#blur1)"/>
<path d="M306.50,322.72 L307.27,322.23 L308.08,322.02 L308.86,322.15 L309.63,322.33 L310.39,322.56 L311.13,322.84 L311.73,323.42 L312.15,324.23 L313.07,324.19 L313.87,324.42 L314.48,324.92 L315.06,325.46 L315.60,326.04 L316.10,326.65 L316.33,327.45 L316.29,328.37 L317.10,328.79 L317.68,329.39 L317.96,330.13 L318.19,330.89 L318.37,331.66 L318.50,332.44 L318.29,333.25 L317.80,334.02 L318.29,334.79 L318.50,335.60 L318.37,336.38 L318.19,337.15 L317.96,337.91 L317.68,338.65 L317.10,339.25 L316.29,339.67 L316.33,340.59 L316.10,341.39 L315.60,342.00 L315.06,342.58 L314.48,343.12 L313.87,343.62 L313.07,343.85 L312.15,343.81 L311.73,344.62 L311.13,345.20 L310.39,345.48 L309.63,345.71 L308.86,345.89 L308.08,346.02 L307.27,345.81 L306.50,345.32 L305.73,345.81 L304.92,346.02 L304.14,345.89 L303.37,345.71 L302.61,345.48 L301.87,345.20 L301.27,344.62 L300.85,343.81 L299.93,343.85 L299.13,343.62 L298.52,343.12 L297.94,342.58 L297.40,342.00 L296.90,341.39 L296.67,340.59 L296.71,339.67 L295.90,339.25 L295.32,338.65 L295.04,337.91 L294.81,337.15 L294.63,336.38 L294.50,335.60 L294.71,334.79 L295.20,334.02 L294.71,333.25 L294.50,332.44 L294.63,331.66 L294.81,330.89 L295.04,330.13 L295.32,329.39 L295.90,328.79 L296.71,328.37 L296.67,327.45 L296.90,326.65 L297.40,326.04 L297.94,325.46 L298.52,324.92 L299.13,324.42 L299.93,324.19 L300.85,324.23 L301.27,323.42 L301.87,322.84 L302.61,322.56 L303.37,322.33 L304.14,322.15 L304.92,322.02 L305.73,322.23 Z" fill="url(#faceG)" stroke="#646464" stroke-width="1.3"/>
<rect x="101.00" y="383.65" width="228.00" height="1.60" rx="0" fill="#808080" />
<rect x="105.50" y="353.65" width="28.00" height="27.50" rx="3" fill="#8e8e8e" />
<clipPath id="c1065_3546"><rect x="106.50" y="354.65" width="26.00" height="25.50" rx="2.5"/></clipPath><g clip-path="url(#c1065_3546)" ><rect x="106.50" y="354.65" width="26.00" height="25.50" fill="#9b9b9b"/><rect x="106.50" y="354.65" width="26.00" height="12.70" fill="#a9a9a9"/></g>
<path d="M124.80,362.25 H117.60 A3.00,3.00 0 0 0 114.60,365.25 V370.42 A3.00,2.72 0 0 0 117.60,373.15 H121.80 A3.00,2.72 0 0 0 121.80,367.70 H114.60" stroke="#e0e0e0" stroke-width="2" fill="none"/>
<rect x="137.90" y="355.15" width="115.90" height="25.00" rx="3" fill="#8a8a8a" />
<clipPath id="c1400_3571"><rect x="140.00" y="357.15" width="87.20" height="21.00" rx="2"/></clipPath><g clip-path="url(#c1400_3571)" ><rect x="140.00" y="357.15" width="87.20" height="21.00" fill="#adadad"/><rect x="140.00" y="357.15" width="87.20" height="10.50" fill="#bdbdbd"/></g>
<clipPath id="c2272_3571"><rect x="227.20" y="357.15" width="24.80" height="21.00" rx="0"/></clipPath><g clip-path="url(#c2272_3571)" ><rect x="227.20" y="357.15" width="24.80" height="21.00" fill="#8f8f8f"/><rect x="227.20" y="357.15" width="24.80" height="10.50" fill="#a0a0a0"/></g>
<path d="M234,365.45 H246 L240,371.15 Z" fill="#bdbdbd"/>
<circle cx="273.2" cy="366.95" r="13.60" fill="#b9b9b9" filter="url(#blur1)"/>
<path d="M273.20,355.65 L273.97,355.16 L274.78,354.95 L275.56,355.08 L276.33,355.26 L277.09,355.49 L277.83,355.77 L278.43,356.35 L278.85,357.16 L279.77,357.12 L280.57,357.35 L281.18,357.85 L281.76,358.39 L282.30,358.97 L282.80,359.58 L283.03,360.38 L282.99,361.30 L283.80,361.72 L284.38,362.32 L284.66,363.06 L284.89,363.82 L285.07,364.59 L285.20,365.37 L284.99,366.18 L284.50,366.95 L284.99,367.72 L285.20,368.53 L285.07,369.31 L284.89,370.08 L284.66,370.84 L284.38,371.58 L283.80,372.18 L282.99,372.60 L283.03,373.52 L282.80,374.32 L282.30,374.93 L281.76,375.51 L281.18,376.05 L280.57,376.55 L279.77,376.78 L278.85,376.74 L278.43,377.55 L277.83,378.13 L277.09,378.41 L276.33,378.64 L275.56,378.82 L274.78,378.95 L273.97,378.74 L273.20,378.25 L272.43,378.74 L271.62,378.95 L270.84,378.82 L270.07,378.64 L269.31,378.41 L268.57,378.13 L267.97,377.55 L267.55,376.74 L266.63,376.78 L265.83,376.55 L265.22,376.05 L264.64,375.51 L264.10,374.93 L263.60,374.32 L263.37,373.52 L263.41,372.60 L262.60,372.18 L262.02,371.58 L261.74,370.84 L261.51,370.08 L261.33,369.31 L261.20,368.53 L261.41,367.72 L261.90,366.95 L261.41,366.18 L261.20,365.37 L261.33,364.59 L261.51,363.82 L261.74,363.06 L262.02,362.32 L262.60,361.72 L263.41,361.30 L263.37,360.38 L263.60,359.58 L264.10,358.97 L264.64,358.39 L265.22,357.85 L265.83,357.35 L266.63,357.12 L267.55,357.16 L267.97,356.35 L268.57,355.77 L269.31,355.49 L270.07,355.26 L270.84,355.08 L271.62,354.95 L272.43,355.16 Z" fill="url(#faceG)" stroke="#646464" stroke-width="1.3"/>
<circle cx="306.5" cy="366.95" r="13.60" fill="#b9b9b9" filter="url(#blur1)"/>
<path d="M306.50,355.65 L307.27,355.16 L308.08,354.95 L308.86,355.08 L309.63,355.26 L310.39,355.49 L311.13,355.77 L311.73,356.35 L312.15,357.16 L313.07,357.12 L313.87,357.35 L314.48,357.85 L315.06,358.39 L315.60,358.97 L316.10,359.58 L316.33,360.38 L316.29,361.30 L317.10,361.72 L317.68,362.32 L317.96,363.06 L318.19,363.82 L318.37,364.59 L318.50,365.37 L318.29,366.18 L317.80,366.95 L318.29,367.72 L318.50,368.53 L318.37,369.31 L318.19,370.08 L317.96,370.84 L317.68,371.58 L317.10,372.18 L316.29,372.60 L316.33,373.52 L316.10,374.32 L315.60,374.93 L315.06,375.51 L314.48,376.05 L313.87,376.55 L313.07,376.78 L312.15,376.74 L311.73,377.55 L311.13,378.13 L310.39,378.41 L309.63,378.64 L308.86,378.82 L308.08,378.95 L307.27,378.74 L306.50,378.25 L305.73,378.74 L304.92,378.95 L304.14,378.82 L303.37,378.64 L302.61,378.41 L301.87,378.13 L301.27,377.55 L300.85,376.74 L299.93,376.78 L299.13,376.55 L298.52,376.05 L297.94,375.51 L297.40,374.93 L296.90,374.32 L296.67,373.52 L296.71,372.60 L295.90,372.18 L295.32,371.58 L295.04,370.84 L294.81,370.08 L294.63,369.31 L294.50,368.53 L294.71,367.72 L295.20,366.95 L294.71,366.18 L294.50,365.37 L294.63,364.59 L294.81,363.82 L295.04,363.06 L295.32,362.32 L295.90,361.72 L296.71,361.30 L296.67,360.38 L296.90,359.58 L297.40,358.97 L297.94,358.39 L298.52,357.85 L299.13,357.35 L299.93,357.12 L300.85,357.16 L301.27,356.35 L301.87,355.77 L302.61,355.49 L303.37,355.26 L304.14,355.08 L304.92,354.95 L305.73,355.16 Z" fill="url(#faceG)" stroke="#646464" stroke-width="1.3"/>
<rect x="101.00" y="416.58" width="228.00" height="1.60" rx="0" fill="#808080" />
<rect x="105.50" y="386.58" width="28.00" height="27.50" rx="3" fill="#8e8e8e" />
<clipPath id="c1065_3875"><rect x="106.50" y="387.58" width="26.00" height="25.50" rx="2.5"/></clipPath><g clip-path="url(#c1065_3875)" ><rect x="106.50" y="387.58" width="26.00" height="25.50" fill="#9b9b9b"/><rect x="106.50" y="387.58" width="26.00" height="12.70" fill="#a9a9a9"/></g>
<path d="M114.60,395.18 H124.80 L117.15,407.08" stroke="#e0e0e0" stroke-width="2" fill="none"/>
<rect x="137.90" y="388.08" width="115.90" height="25.00" rx="3" fill="#8a8a8a" />
<clipPath id="c1400_3900"><rect x="140.00" y="390.08" width="87.20" height="21.00" rx="2"/></clipPath><g clip-path="url(#c1400_3900)" ><rect x="140.00" y="390.08" width="87.20" height="21.00" fill="#adadad"/><rect x="140.00" y="390.08" width="87.20" height="10.50" fill="#bdbdbd"/></g>
<clipPath id="c2272_3900"><rect x="227.20" y="390.08" width="24.80" height="21.00" rx="0"/></clipPath><g clip-path="url(#c2272_3900)" ><rect x="227.20" y="390.08" width="24.80" height="21.00" fill="#8f8f8f"/><rect x="227.20" y="390.08" width="24.80" height="10.50" fill="#a0a0a0"/></g>
<path d="M234,398.38 H246 L240,404.08 Z" fill="#bdbdbd"/>
<circle cx="273.2" cy="399.88" r="13.60" fill="#b9b9b9" filter="url(#blur1)"/>
<path d="M273.20,388.58 L273.97,388.09 L274.78,387.88 L275.56,388.01 L276.33,388.19 L277.09,388.42 L277.83,388.70 L278.43,389.28 L278.85,390.09 L279.77,390.05 L280.57,390.28 L281.18,390.78 L281.76,391.32 L282.30,391.90 L282.80,392.51 L283.03,393.31 L282.99,394.23 L283.80,394.65 L284.38,395.25 L284.66,395.99 L284.89,396.75 L285.07,397.52 L285.20,398.30 L284.99,399.11 L284.50,399.88 L284.99,400.65 L285.20,401.46 L285.07,402.24 L284.89,403.01 L284.66,403.77 L284.38,404.51 L283.80,405.11 L282.99,405.53 L283.03,406.45 L282.80,407.25 L282.30,407.86 L281.76,408.44 L281.18,408.98 L280.57,409.48 L279.77,409.71 L278.85,409.67 L278.43,410.48 L277.83,411.06 L277.09,411.34 L276.33,411.57 L275.56,411.75 L274.78,411.88 L273.97,411.67 L273.20,411.18 L272.43,411.67 L271.62,411.88 L270.84,411.75 L270.07,411.57 L269.31,411.34 L268.57,411.06 L267.97,410.48 L267.55,409.67 L266.63,409.71 L265.83,409.48 L265.22,408.98 L264.64,408.44 L264.10,407.86 L263.60,407.25 L263.37,406.45 L263.41,405.53 L262.60,405.11 L262.02,404.51 L261.74,403.77 L261.51,403.01 L261.33,402.24 L261.20,401.46 L261.41,400.65 L261.90,399.88 L261.41,399.11 L261.20,398.30 L261.33,397.52 L261.51,396.75 L261.74,395.99 L262.02,395.25 L262.60,394.65 L263.41,394.23 L263.37,393.31 L263.60,392.51 L264.10,391.90 L264.64,391.32 L265.22,390.78 L265.83,390.28 L266.63,390.05 L267.55,390.09 L267.97,389.28 L268.57,388.70 L269.31,388.42 L270.07,388.19 L270.84,388.01 L271.62,387.88 L272.43,388.09 Z" fill="url(#faceG)" stroke="#646464" stroke-width="1.3"/>
<circle cx="306.5" cy="399.88" r="13.60" fill="#b9b9b9" filter="url(#blur1)"/>
<path d="M306.50,388.58 L307.27,388.09 L308.08,387.88 L308.86,388.01 L309.63,388.19 L310.39,388.42 L311.13,388.70 L311.73,389.28 L312.15,390.09 L313.07,390.05 L313.87,390.28 L314.48,390.78 L315.06,391.32 L315.60,391.90 L316.10,392.51 L316.33,393.31 L316.29,394.23 L317.10,394.65 L317.68,395.25 L317.96,395.99 L318.19,396.75 L318.37,397.52 L318.50,398.30 L318.29,399.11 L317.80,399.88 L318.29,400.65 L318.50,401.46 L318.37,402.24 L318.19,403.01 L317.96,403.77 L317.68,404.51 L317.10,405.11 L316.29,405.53 L316.33,406.45 L316.10,407.25 L315.60,407.86 L315.06,408.44 L314.48,408.98 L313.87,409.48 L313.07,409.71 L312.15,409.67 L311.73,410.48 L311.13,411.06 L310.39,411.34 L309.63,411.57 L308.86,411.75 L308.08,411.88 L307.27,411.67 L306.50,411.18 L305.73,411.67 L304.92,411.88 L304.14,411.75 L303.37,411.57 L302.61,411.34 L301.87,411.06 L301.27,410.48 L300.85,409.67 L299.93,409.71 L299.13,409.48 L298.52,408.98 L297.94,408.44 L297.40,407.86 L296.90,407.25 L296.67,406.45 L296.71,405.53 L295.90,405.11 L295.32,404.51 L295.04,403.77 L294.81,403.01 L294.63,402.24 L294.50,401.46 L294.71,400.65 L295.20,399.88 L294.71,399.11 L294.50,398.30 L294.63,397.52 L294.81,396.75 L295.04,395.99 L295.32,395.25 L295.90,394.65 L296.71,394.23 L296.67,393.31 L296.90,392.51 L297.40,391.90 L297.94,391.32 L298.52,390.78 L299.13,390.28 L299.93,390.05 L300.85,390.09 L301.27,389.28 L301.87,388.70 L302.61,388.42 L303.37,388.19 L304.14,388.01 L304.92,387.88 L305.73,388.09 Z" fill="url(#faceG)" stroke="#646464" stroke-width="1.3"/>
<rect x="101.00" y="449.51" width="228.00" height="1.60" rx="0" fill="#808080" />
<rect x="105.50" y="419.51" width="28.00" height="27.50" rx="3" fill="#8e8e8e" />
<clipPath id="c1065_4205"><rect x="106.50" y="420.51" width="26.00" height="25.50" rx="2.5"/></clipPath><g clip-path="url(#c1065_4205)" ><rect x="106.50" y="420.51" width="26.00" height="25.50" fill="#9b9b9b"/><rect x="106.50" y="420.51" width="26.00" height="12.70" fill="#a9a9a9"/></g>
<path d="M117.60,428.11 H121.80 A3.00,2.72 0 0 1 121.80,433.56 H117.60 A3.00,2.72 0 0 1 117.60,428.11 Z M117.60,433.56 H121.80 A3.00,2.72 0 0 1 121.80,439.01 H117.60 A3.00,2.72 0 0 1 117.60,433.56 Z" stroke="#e0e0e0" stroke-width="2" fill="none"/>
<rect x="137.90" y="421.01" width="115.90" height="25.00" rx="3" fill="#8a8a8a" />
<clipPath id="c1400_4230"><rect x="140.00" y="423.01" width="87.20" height="21.00" rx="2"/></clipPath><g clip-path="url(#c1400_4230)" ><rect x="140.00" y="423.01" width="87.20" height="21.00" fill="#adadad"/><rect x="140.00" y="423.01" width="87.20" height="10.50" fill="#bdbdbd"/></g>
<clipPath id="c2272_4230"><rect x="227.20" y="423.01" width="24.80" height="21.00" rx="0"/></clipPath><g clip-path="url(#c2272_4230)" ><rect x="227.20" y="423.01" width="24.80" height="21.00" fill="#8f8f8f"/><rect x="227.20" y="423.01" width="24.80" height="10.50" fill="#a0a0a0"/></g>
<path d="M234,431.31 H246 L240,437.01 Z" fill="#bdbdbd"/>
<circle cx="273.2" cy="432.81" r="13.60" fill="#b9b9b9" filter="url(#blur1)"/>
<path d="M273.20,421.51 L273.97,421.02 L274.78,420.81 L275.56,420.94 L276.33,421.12 L277.09,421.35 L277.83,421.63 L278.43,422.21 L278.85,423.02 L279.77,422.98 L280.57,423.21 L281.18,423.71 L281.76,424.25 L282.30,424.83 L282.80,425.44 L283.03,426.24 L282.99,427.16 L283.80,427.58 L284.38,428.18 L284.66,428.92 L284.89,429.68 L285.07,430.45 L285.20,431.23 L284.99,432.04 L284.50,432.81 L284.99,433.58 L285.20,434.39 L285.07,435.17 L284.89,435.94 L284.66,436.70 L284.38,437.44 L283.80,438.04 L282.99,438.46 L283.03,439.38 L282.80,440.18 L282.30,440.79 L281.76,441.37 L281.18,441.91 L280.57,442.41 L279.77,442.64 L278.85,442.60 L278.43,443.41 L277.83,443.99 L277.09,444.27 L276.33,444.50 L275.56,444.68 L274.78,444.81 L273.97,444.60 L273.20,444.11 L272.43,444.60 L271.62,444.81 L270.84,444.68 L270.07,444.50 L269.31,444.27 L268.57,443.99 L267.97,443.41 L267.55,442.60 L266.63,442.64 L265.83,442.41 L265.22,441.91 L264.64,441.37 L264.10,440.79 L263.60,440.18 L263.37,439.38 L263.41,438.46 L262.60,438.04 L262.02,437.44 L261.74,436.70 L261.51,435.94 L261.33,435.17 L261.20,434.39 L261.41,433.58 L261.90,432.81 L261.41,432.04 L261.20,431.23 L261.33,430.45 L261.51,429.68 L261.74,428.92 L262.02,428.18 L262.60,427.58 L263.41,427.16 L263.37,426.24 L263.60,425.44 L264.10,424.83 L264.64,424.25 L265.22,423.71 L265.83,423.21 L266.63,422.98 L267.55,423.02 L267.97,422.21 L268.57,421.63 L269.31,421.35 L270.07,421.12 L270.84,420.94 L271.62,420.81 L272.43,421.02 Z" fill="url(#faceG)" stroke="#646464" stroke-width="1.3"/>
<circle cx="306.5" cy="432.81" r="13.60" fill="#b9b9b9" filter="url(#blur1)"/>
<path d="M306.50,421.51 L307.27,421.02 L308.08,420.81 L308.86,420.94 L309.63,421.12 L310.39,421.35 L311.13,421.63 L311.73,422.21 L312.15,423.02 L313.07,422.98 L313.87,423.21 L314.48,423.71 L315.06,424.25 L315.60,424.83 L316.10,425.44 L316.33,426.24 L316.29,427.16 L317.10,427.58 L317.68,428.18 L317.96,428.92 L318.19,429.68 L318.37,430.45 L318.50,431.23 L318.29,432.04 L317.80,432.81 L318.29,433.58 L318.50,434.39 L318.37,435.17 L318.19,435.94 L317.96,436.70 L317.68,437.44 L317.10,438.04 L316.29,438.46 L316.33,439.38 L316.10,440.18 L315.60,440.79 L315.06,441.37 L314.48,441.91 L313.87,442.41 L313.07,442.64 L312.15,442.60 L311.73,443.41 L311.13,443.99 L310.39,444.27 L309.63,444.50 L308.86,444.68 L308.08,444.81 L307.27,444.60 L306.50,444.11 L305.73,444.60 L304.92,444.81 L304.14,444.68 L303.37,444.50 L302.61,444.27 L301.87,443.99 L301.27,443.41 L300.85,442.60 L299.93,442.64 L299.13,442.41 L298.52,441.91 L297.94,441.37 L297.40,440.79 L296.90,440.18 L296.67,439.38 L296.71,438.46 L295.90,438.04 L295.32,437.44 L295.04,436.70 L294.81,435.94 L294.63,435.17 L294.50,434.39 L294.71,433.58 L295.20,432.81 L294.71,432.04 L294.50,431.23 L294.63,430.45 L294.81,429.68 L295.04,428.92 L295.32,428.18 L295.90,427.58 L296.71,427.16 L296.67,426.24 L296.90,425.44 L297.40,424.83 L297.94,424.25 L298.52,423.71 L299.13,423.21 L299.93,422.98 L300.85,423.02 L301.27,422.21 L301.87,421.63 L302.61,421.35 L303.37,421.12 L304.14,420.94 L304.92,420.81 L305.73,421.02 Z" fill="url(#faceG)" stroke="#646464" stroke-width="1.3"/>
<rect x="101.00" y="482.44" width="228.00" height="1.60" rx="0" fill="#808080" />
<rect x="105.50" y="452.44" width="28.00" height="27.50" rx="3" fill="#8e8e8e" />
<clipPath id="c1065_4534"><rect x="106.50" y="453.44" width="26.00" height="25.50" rx="2.5"/></clipPath><g clip-path="url(#c1065_4534)" ><rect x="106.50" y="453.44" width="26.00" height="25.50" fill="#9b9b9b"/><rect x="106.50" y="453.44" width="26.00" height="12.70" fill="#a9a9a9"/></g>
<path d="M114.60,471.94 H121.80 A3.00,3.00 0 0 0 124.80,468.94 V463.76 A3.00,2.72 0 0 0 121.80,461.04 H117.60 A3.00,2.72 0 0 0 117.60,466.49 H124.80" stroke="#e0e0e0" stroke-width="2" fill="none"/>
<rect x="137.90" y="453.94" width="115.90" height="25.00" rx="3" fill="#8a8a8a" />
<clipPath id="c1400_4559"><rect x="140.00" y="455.94" width="87.20" height="21.00" rx="2"/></clipPath><g clip-path="url(#c1400_4559)" ><rect x="140.00" y="455.94" width="87.20" height="21.00" fill="#adadad"/><rect x="140.00" y="455.94" width="87.20" height="10.50" fill="#bdbdbd"/></g>
<clipPath id="c2272_4559"><rect x="227.20" y="455.94" width="24.80" height="21.00" rx="0"/></clipPath><g clip-path="url(#c2272_4559)" ><rect x="227.20" y="455.94" width="24.80" height="21.00" fill="#8f8f8f"/><rect x="227.20" y="455.94" width="24.80" height="10.50" fill="#a0a0a0"/></g>
<path d="M234,464.24 H246 L240,469.94 Z" fill="#bdbdbd"/>
<circle cx="273.2" cy="465.74" r="13.60" fill="#b9b9b9" filter="url(#blur1)"/>
<path d="M273.20,454.44 L273.97,453.95 L274.78,453.74 L275.56,453.87 L276.33,454.05 L277.09,454.28 L277.83,454.56 L278.43,455.14 L278.85,455.95 L279.77,455.91 L280.57,456.14 L281.18,456.64 L281.76,457.18 L282.30,457.76 L282.80,458.37 L283.03,459.17 L282.99,460.09 L283.80,460.51 L284.38,461.11 L284.66,461.85 L284.89,462.61 L285.07,463.38 L285.20,464.16 L284.99,464.97 L284.50,465.74 L284.99,466.51 L285.20,467.32 L285.07,468.10 L284.89,468.87 L284.66,469.63 L284.38,470.37 L283.80,470.97 L282.99,471.39 L283.03,472.31 L282.80,473.11 L282.30,473.72 L281.76,474.30 L281.18,474.84 L280.57,475.34 L279.77,475.57 L278.85,475.53 L278.43,476.34 L277.83,476.92 L277.09,477.20 L276.33,477.43 L275.56,477.61 L274.78,477.74 L273.97,477.53 L273.20,477.04 L272.43,477.53 L271.62,477.74 L270.84,477.61 L270.07,477.43 L269.31,477.20 L268.57,476.92 L267.97,476.34 L267.55,475.53 L266.63,475.57 L265.83,475.34 L265.22,474.84 L264.64,474.30 L264.10,473.72 L263.60,473.11 L263.37,472.31 L263.41,471.39 L262.60,470.97 L262.02,470.37 L261.74,469.63 L261.51,468.87 L261.33,468.10 L261.20,467.32 L261.41,466.51 L261.90,465.74 L261.41,464.97 L261.20,464.16 L261.33,463.38 L261.51,462.61 L261.74,461.85 L262.02,461.11 L262.60,460.51 L263.41,460.09 L263.37,459.17 L263.60,458.37 L264.10,457.76 L264.64,457.18 L265.22,456.64 L265.83,456.14 L266.63,455.91 L267.55,455.95 L267.97,455.14 L268.57,454.56 L269.31,454.28 L270.07,454.05 L270.84,453.87 L271.62,453.74 L272.43,453.95 Z" fill="url(#faceG)" stroke="#646464" stroke-width="1.3"/>
<circle cx="306.5" cy="465.74" r="13.60" fill="#b9b9b9" filter="url(#blur1)"/>
<path d="M306.50,454.44 L307.27,453.95 L308.08,453.74 L308.86,453.87 L309.63,454.05 L310.39,454.28 L311.13,454.56 L311.73,455.14 L312.15,455.95 L313.07,455.91 L313.87,456.14 L314.48,456.64 L315.06,457.18 L315.60,457.76 L316.10,458.37 L316.33,459.17 L316.29,460.09 L317.10,460.51 L317.68,461.11 L317.96,461.85 L318.19,462.61 L318.37,463.38 L318.50,464.16 L318.29,464.97 L317.80,465.74 L318.29,466.51 L318.50,467.32 L318.37,468.10 L318.19,468.87 L317.96,469.63 L317.68,470.37 L317.10,470.97 L316.29,471.39 L316.33,472.31 L316.10,473.11 L315.60,473.72 L315.06,474.30 L314.48,474.84 L313.87,475.34 L313.07,475.57 L312.15,475.53 L311.73,476.34 L311.13,476.92 L310.39,477.20 L309.63,477.43 L308.86,477.61 L308.08,477.74 L307.27,477.53 L306.50,477.04 L305.73,477.53 L304.92,477.74 L304.14,477.61 L303.37,477.43 L302.61,477.20 L301.87,476.92 L301.27,476.34 L300.85,475.53 L299.93,475.57 L299.13,475.34 L298.52,474.84 L297.94,474.30 L297.40,473.72 L296.90,473.11 L296.67,472.31 L296.71,471.39 L295.90,470.97 L295.32,470.37 L295.04,469.63 L294.81,468.87 L294.63,468.10 L294.50,467.32 L294.71,466.51 L295.20,465.74 L294.71,464.97 L294.50,464.16 L294.63,463.38 L294.81,462.61 L295.04,461.85 L295.32,461.11 L295.90,460.51 L296.71,460.09 L296.67,459.17 L296.90,458.37 L297.40,457.76 L297.94,457.18 L298.52,456.64 L299.13,456.14 L299.93,455.91 L300.85,455.95 L301.27,455.14 L301.87,454.56 L302.61,454.28 L303.37,454.05 L304.14,453.87 L304.92,453.74 L305.73,453.95 Z" fill="url(#faceG)" stroke="#646464" stroke-width="1.3"/>
<rect x="101.00" y="515.37" width="228.00" height="1.60" rx="0" fill="#808080" />
<rect x="105.50" y="485.37" width="28.00" height="27.50" rx="3" fill="#8e8e8e" />
<clipPath id="c1065_4863"><rect x="106.50" y="486.37" width="26.00" height="25.50" rx="2.5"/></clipPath><g clip-path="url(#c1065_4863)" ><rect x="106.50" y="486.37" width="26.00" height="25.50" fill="#9b9b9b"/><rect x="106.50" y="486.37" width="26.00" height="12.70" fill="#a9a9a9"/></g>
<path d="M111.10,492.97 V505.87 M120.60,493.97 H120.60 A5.40,5.45 0 0 1 120.60,504.87 H120.60 A5.40,5.45 0 0 1 120.60,493.97 Z" stroke="#e0e0e0" stroke-width="2" fill="none"/>
<rect x="137.90" y="486.87" width="115.90" height="25.00" rx="3" fill="#8a8a8a" />
<clipPath id="c1400_4888"><rect x="140.00" y="488.87" width="87.20" height="21.00" rx="2"/></clipPath><g clip-path="url(#c1400_4888)" ><rect x="140.00" y="488.87" width="87.20" height="21.00" fill="#adadad"/><rect x="140.00" y="488.87" width="87.20" height="10.50" fill="#bdbdbd"/></g>
<clipPath id="c2272_4888"><rect x="227.20" y="488.87" width="24.80" height="21.00" rx="0"/></clipPath><g clip-path="url(#c2272_4888)" ><rect x="227.20" y="488.87" width="24.80" height="21.00" fill="#8f8f8f"/><rect x="227.20" y="488.87" width="24.80" height="10.50" fill="#a0a0a0"/></g>
<path d="M234,497.17 H246 L240,502.87 Z" fill="#bdbdbd"/>
<circle cx="273.2" cy="498.67" r="13.60" fill="#b9b9b9" filter="url(#blur1)"/>
<path d="M273.20,487.37 L273.97,486.88 L274.78,486.67 L275.56,486.80 L276.33,486.98 L277.09,487.21 L277.83,487.49 L278.43,488.07 L278.85,488.88 L279.77,488.84 L280.57,489.07 L281.18,489.57 L281.76,490.11 L282.30,490.69 L282.80,491.30 L283.03,492.10 L282.99,493.02 L283.80,493.44 L284.38,494.04 L284.66,494.78 L284.89,495.54 L285.07,496.31 L285.20,497.09 L284.99,497.90 L284.50,498.67 L284.99,499.44 L285.20,500.25 L285.07,501.03 L284.89,501.80 L284.66,502.56 L284.38,503.30 L283.80,503.90 L282.99,504.32 L283.03,505.24 L282.80,506.04 L282.30,506.65 L281.76,507.23 L281.18,507.77 L280.57,508.27 L279.77,508.50 L278.85,508.46 L278.43,509.27 L277.83,509.85 L277.09,510.13 L276.33,510.36 L275.56,510.54 L274.78,510.67 L273.97,510.46 L273.20,509.97 L272.43,510.46 L271.62,510.67 L270.84,510.54 L270.07,510.36 L269.31,510.13 L268.57,509.85 L267.97,509.27 L267.55,508.46 L266.63,508.50 L265.83,508.27 L265.22,507.77 L264.64,507.23 L264.10,506.65 L263.60,506.04 L263.37,505.24 L263.41,504.32 L262.60,503.90 L262.02,503.30 L261.74,502.56 L261.51,501.80 L261.33,501.03 L261.20,500.25 L261.41,499.44 L261.90,498.67 L261.41,497.90 L261.20,497.09 L261.33,496.31 L261.51,495.54 L261.74,494.78 L262.02,494.04 L262.60,493.44 L263.41,493.02 L263.37,492.10 L263.60,491.30 L264.10,490.69 L264.64,490.11 L265.22,489.57 L265.83,489.07 L266.63,488.84 L267.55,488.88 L267.97,488.07 L268.57,487.49 L269.31,487.21 L270.07,486.98 L270.84,486.80 L271.62,486.67 L272.43,486.88 Z" fill="url(#faceG)" stroke="#646464" stroke-width="1.3"/>
<circle cx="306.5" cy="498.67" r="13.60" fill="#b9b9b9" filter="url(#blur1)"/>
<path d="M306.50,487.37 L307.27,486.88 L308.08,486.67 L308.86,486.80 L309.63,486.98 L310.39,487.21 L311.13,487.49 L311.73,488.07 L312.15,488.88 L313.07,488.84 L313.87,489.07 L314.48,489.57 L315.06,490.11 L315.60,490.69 L316.10,491.30 L316.33,492.10 L316.29,493.02 L317.10,493.44 L317.68,494.04 L317.96,494.78 L318.19,495.54 L318.37,496.31 L318.50,497.09 L318.29,497.90 L317.80,498.67 L318.29,499.44 L318.50,500.25 L318.37,501.03 L318.19,501.80 L317.96,502.56 L317.68,503.30 L317.10,503.90 L316.29,504.32 L316.33,505.24 L316.10,506.04 L315.60,506.65 L315.06,507.23 L314.48,507.77 L313.87,508.27 L313.07,508.50 L312.15,508.46 L311.73,509.27 L311.13,509.85 L310.39,510.13 L309.63,510.36 L308.86,510.54 L308.08,510.67 L307.27,510.46 L306.50,509.97 L305.73,510.46 L304.92,510.67 L304.14,510.54 L303.37,510.36 L302.61,510.13 L301.87,509.85 L301.27,509.27 L300.85,508.46 L299.93,508.50 L299.13,508.27 L298.52,507.77 L297.94,507.23 L297.40,506.65 L296.90,506.04 L296.67,505.24 L296.71,504.32 L295.90,503.90 L295.32,503.30 L295.04,502.56 L294.81,501.80 L294.63,501.03 L294.50,500.25 L294.71,499.44 L295.20,498.67 L294.71,497.90 L294.50,497.09 L294.63,496.31 L294.81,495.54 L295.04,494.78 L295.32,494.04 L295.90,493.44 L296.71,493.02 L296.67,492.10 L296.90,491.30 L297.40,490.69 L297.94,490.11 L298.52,489.57 L299.13,489.07 L299.93,488.84 L300.85,488.88 L301.27,488.07 L301.87,487.49 L302.61,487.21 L303.37,486.98 L304.14,486.80 L304.92,486.67 L305.73,486.88 Z" fill="url(#faceG)" stroke="#646464" stroke-width="1.3"/>
<rect x="101.00" y="548.30" width="228.00" height="1.60" rx="0" fill="#808080" />
<rect x="105.50" y="518.30" width="28.00" height="27.50" rx="3" fill="#8e8e8e" />
<clipPath id="c1065_5193"><rect x="106.50" y="519.30" width="26.00" height="25.50" rx="2.5"/></clipPath><g clip-path="url(#c1065_5193)" ><rect x="106.50" y="519.30" width="26.00" height="25.50" fill="#9b9b9b"/><rect x="106.50" y="519.30" width="26.00" height="12.70" fill="#a9a9a9"/></g>
<path d="M111.10,525.90 V538.80 M120.60,525.90 V538.80" stroke="#e0e0e0" stroke-width="2" fill="none"/>
<rect x="137.90" y="519.80" width="115.90" height="25.00" rx="3" fill="#8a8a8a" />
<clipPath id="c1400_5218"><rect x="140.00" y="521.80" width="87.20" height="21.00" rx="2"/></clipPath><g clip-path="url(#c1400_5218)" ><rect x="140.00" y="521.80" width="87.20" height="21.00" fill="#adadad"/><rect x="140.00" y="521.80" width="87.20" height="10.50" fill="#bdbdbd"/></g>
<clipPath id="c2272_5218"><rect x="227.20" y="521.80" width="24.80" height="21.00" rx="0"/></clipPath><g clip-path="url(#c2272_5218)" ><rect x="227.20" y="521.80" width="24.80" height="21.00" fill="#8f8f8f"/><rect x="227.20" y="521.80" width="24.80" height="10.50" fill="#a0a0a0"/></g>
<path d="M234,530.0999999999999 H246 L240,535.8 Z" fill="#bdbdbd"/>
<circle cx="273.2" cy="531.5999999999999" r="13.60" fill="#b9b9b9" filter="url(#blur1)"/>
<path d="M273.20,520.30 L273.97,519.81 L274.78,519.60 L275.56,519.73 L276.33,519.91 L277.09,520.14 L277.83,520.42 L278.43,521.00 L278.85,521.81 L279.77,521.77 L280.57,522.00 L281.18,522.50 L281.76,523.04 L282.30,523.62 L282.80,524.23 L283.03,525.03 L282.99,525.95 L283.80,526.37 L284.38,526.97 L284.66,527.71 L284.89,528.47 L285.07,529.24 L285.20,530.02 L284.99,530.83 L284.50,531.60 L284.99,532.37 L285.20,533.18 L285.07,533.96 L284.89,534.73 L284.66,535.49 L284.38,536.23 L283.80,536.83 L282.99,537.25 L283.03,538.17 L282.80,538.97 L282.30,539.58 L281.76,540.16 L281.18,540.70 L280.57,541.20 L279.77,541.43 L278.85,541.39 L278.43,542.20 L277.83,542.78 L277.09,543.06 L276.33,543.29 L275.56,543.47 L274.78,543.60 L273.97,543.39 L273.20,542.90 L272.43,543.39 L271.62,543.60 L270.84,543.47 L270.07,543.29 L269.31,543.06 L268.57,542.78 L267.97,542.20 L267.55,541.39 L266.63,541.43 L265.83,541.20 L265.22,540.70 L264.64,540.16 L264.10,539.58 L263.60,538.97 L263.37,538.17 L263.41,537.25 L262.60,536.83 L262.02,536.23 L261.74,535.49 L261.51,534.73 L261.33,533.96 L261.20,533.18 L261.41,532.37 L261.90,531.60 L261.41,530.83 L261.20,530.02 L261.33,529.24 L261.51,528.47 L261.74,527.71 L262.02,526.97 L262.60,526.37 L263.41,525.95 L263.37,525.03 L263.60,524.23 L264.10,523.62 L264.64,523.04 L265.22,522.50 L265.83,522.00 L266.63,521.77 L267.55,521.81 L267.97,521.00 L268.57,520.42 L269.31,520.14 L270.07,519.91 L270.84,519.73 L271.62,519.60 L272.43,519.81 Z" fill="url(#faceG)" stroke="#646464" stroke-width="1.3"/>
<circle cx="306.5" cy="531.5999999999999" r="13.60" fill="#b9b9b9" filter="url(#blur1)"/>
<path d="M306.50,520.30 L307.27,519.81 L308.08,519.60 L308.86,519.73 L309.63,519.91 L310.39,520.14 L311.13,520.42 L311.73,521.00 L312.15,521.81 L313.07,521.77 L313.87,522.00 L314.48,522.50 L315.06,523.04 L315.60,523.62 L316.10,524.23 L316.33,525.03 L316.29,525.95 L317.10,526.37 L317.68,526.97 L317.96,527.71 L318.19,528.47 L318.37,529.24 L318.50,530.02 L318.29,530.83 L317.80,531.60 L318.29,532.37 L318.50,533.18 L318.37,533.96 L318.19,534.73 L317.96,535.49 L317.68,536.23 L317.10,536.83 L316.29,537.25 L316.33,538.17 L316.10,538.97 L315.60,539.58 L315.06,540.16 L314.48,540.70 L313.87,541.20 L313.07,541.43 L312.15,541.39 L311.73,542.20 L311.13,542.78 L310.39,543.06 L309.63,543.29 L308.86,543.47 L308.08,543.60 L307.27,543.39 L306.50,542.90 L305.73,543.39 L304.92,543.60 L304.14,543.47 L303.37,543.29 L302.61,543.06 L301.87,542.78 L301.27,542.20 L300.85,541.39 L299.93,541.43 L299.13,541.20 L298.52,540.70 L297.94,540.16 L297.40,539.58 L296.90,538.97 L296.67,538.17 L296.71,537.25 L295.90,536.83 L295.32,536.23 L295.04,535.49 L294.81,534.73 L294.63,533.96 L294.50,533.18 L294.71,532.37 L295.20,531.60 L294.71,530.83 L294.50,530.02 L294.63,529.24 L294.81,528.47 L295.04,527.71 L295.32,526.97 L295.90,526.37 L296.71,525.95 L296.67,525.03 L296.90,524.23 L297.40,523.62 L297.94,523.04 L298.52,522.50 L299.13,522.00 L299.93,521.77 L300.85,521.81 L301.27,521.00 L301.87,520.42 L302.61,520.14 L303.37,519.91 L304.14,519.73 L304.92,519.60 L305.73,519.81 Z" fill="url(#faceG)" stroke="#646464" stroke-width="1.3"/>
<rect x="101.00" y="581.23" width="228.00" height="1.60" rx="0" fill="#808080" />
<rect x="105.50" y="551.23" width="28.00" height="27.50" rx="3" fill="#8e8e8e" />
<clipPath id="c1065_5522"><rect x="106.50" y="552.23" width="26.00" height="25.50" rx="2.5"/></clipPath><g clip-path="url(#c1065_5522)" ><rect x="106.50" y="552.23" width="26.00" height="25.50" fill="#9b9b9b"/><rect x="106.50" y="552.23" width="26.00" height="12.70" fill="#a9a9a9"/></g>
<path d="M111.10,558.83 V571.73 M115.20,559.83 H123.00 A3.00,2.72 0 0 1 123.00,565.28 H118.20 A3.00,2.72 0 0 0 115.20,568.00 V570.73 H126.00" stroke="#e0e0e0" stroke-width="2" fill="none"/>
<rect x="137.90" y="552.73" width="115.90" height="25.00" rx="3" fill="#8a8a8a" />
<clipPath id="c1400_5547"><rect x="140.00" y="554.73" width="87.20" height="21.00" rx="2"/></clipPath><g clip-path="url(#c1400_5547)" ><rect x="140.00" y="554.73" width="87.20" height="21.00" fill="#adadad"/><rect x="140.00" y="554.73" width="87.20" height="10.50" fill="#bdbdbd"/></g>
<clipPath id="c2272_5547"><rect x="227.20" y="554.73" width="24.80" height="21.00" rx="0"/></clipPath><g clip-path="url(#c2272_5547)" ><rect x="227.20" y="554.73" width="24.80" height="21.00" fill="#8f8f8f"/><rect x="227.20" y="554.73" width="24.80" height="10.50" fill="#a0a0a0"/></g>
<path d="M234,563.03 H246 L240,568.73 Z" fill="#bdbdbd"/>
<circle cx="273.2" cy="564.53" r="13.60" fill="#b9b9b9" filter="url(#blur1)"/>
<path d="M273.20,553.23 L273.97,552.74 L274.78,552.53 L275.56,552.66 L276.33,552.84 L277.09,553.07 L277.83,553.35 L278.43,553.93 L278.85,554.74 L279.77,554.70 L280.57,554.93 L281.18,555.43 L281.76,555.97 L282.30,556.55 L282.80,557.16 L283.03,557.96 L282.99,558.88 L283.80,559.30 L284.38,559.90 L284.66,560.64 L284.89,561.40 L285.07,562.17 L285.20,562.95 L284.99,563.76 L284.50,564.53 L284.99,565.30 L285.20,566.11 L285.07,566.89 L284.89,567.66 L284.66,568.42 L284.38,569.16 L283.80,569.76 L282.99,570.18 L283.03,571.10 L282.80,571.90 L282.30,572.51 L281.76,573.09 L281.18,573.63 L280.57,574.13 L279.77,574.36 L278.85,574.32 L278.43,575.13 L277.83,575.71 L277.09,575.99 L276.33,576.22 L275.56,576.40 L274.78,576.53 L273.97,576.32 L273.20,575.83 L272.43,576.32 L271.62,576.53 L270.84,576.40 L270.07,576.22 L269.31,575.99 L268.57,575.71 L267.97,575.13 L267.55,574.32 L266.63,574.36 L265.83,574.13 L265.22,573.63 L264.64,573.09 L264.10,572.51 L263.60,571.90 L263.37,571.10 L263.41,570.18 L262.60,569.76 L262.02,569.16 L261.74,568.42 L261.51,567.66 L261.33,566.89 L261.20,566.11 L261.41,565.30 L261.90,564.53 L261.41,563.76 L261.20,562.95 L261.33,562.17 L261.51,561.40 L261.74,560.64 L262.02,559.90 L262.60,559.30 L263.41,558.88 L263.37,557.96 L263.60,557.16 L264.10,556.55 L264.64,555.97 L265.22,555.43 L265.83,554.93 L266.63,554.70 L267.55,554.74 L267.97,553.93 L268.57,553.35 L269.31,553.07 L270.07,552.84 L270.84,552.66 L271.62,552.53 L272.43,552.74 Z" fill="url(#faceG)" stroke="#646464" stroke-width="1.3"/>
<circle cx="306.5" cy="564.53" r="13.60" fill="#b9b9b9" filter="url(#blur1)"/>
<path d="M306.50,553.23 L307.27,552.74 L308.08,552.53 L308.86,552.66 L309.63,552.84 L310.39,553.07 L311.13,553.35 L311.73,553.93 L312.15,554.74 L313.07,554.70 L313.87,554.93 L314.48,555.43 L315.06,555.97 L315.60,556.55 L316.10,557.16 L316.33,557.96 L316.29,558.88 L317.10,559.30 L317.68,559.90 L317.96,560.64 L318.19,561.40 L318.37,562.17 L318.50,562.95 L318.29,563.76 L317.80,564.53 L318.29,565.30 L318.50,566.11 L318.37,566.89 L318.19,567.66 L317.96,568.42 L317.68,569.16 L317.10,569.76 L316.29,570.18 L316.33,571.10 L316.10,571.90 L315.60,572.51 L315.06,573.09 L314.48,573.63 L313.87,574.13 L313.07,574.36 L312.15,574.32 L311.73,575.13 L311.13,575.71 L310.39,575.99 L309.63,576.22 L308.86,576.40 L308.08,576.53 L307.27,576.32 L306.50,575.83 L305.73,576.32 L304.92,576.53 L304.14,576.40 L303.37,576.22 L302.61,575.99 L301.87,575.71 L301.27,575.13 L300.85,574.32 L299.93,574.36 L299.13,574.13 L298.52,573.63 L297.94,573.09 L297.40,572.51 L296.90,571.90 L296.67,571.10 L296.71,570.18 L295.90,569.76 L295.32,569.16 L295.04,568.42 L294.81,567.66 L294.63,566.89 L294.50,566.11 L294.71,565.30 L295.20,564.53 L294.71,563.76 L294.50,562.95 L294.63,562.17 L294.81,561.40 L295.04,560.64 L295.32,559.90 L295.90,559.30 L296.71,558.88 L296.67,557.96 L296.90,557.16 L297.40,556.55 L297.94,555.97 L298.52,555.43 L299.13,554.93 L299.93,554.70 L300.85,554.74 L301.27,553.93 L301.87,553.35 L302.61,553.07 L303.37,552.84 L304.14,552.66 L304.92,552.53 L305.73,552.74 Z" fill="url(#faceG)" stroke="#646464" stroke-width="1.3"/>
<rect x="101.00" y="614.16" width="228.00" height="1.60" rx="0" fill="#808080" />
<rect x="105.50" y="584.16" width="28.00" height="27.50" rx="3" fill="#8e8e8e" />
<clipPath id="c1065_5851"><rect x="106.50" y="585.16" width="26.00" height="25.50" rx="2.5"/></clipPath><g clip-path="url(#c1065_5851)" ><rect x="106.50" y="585.16" width="26.00" height="25.50" fill="#9b9b9b"/><rect x="106.50" y="585.16" width="26.00" height="12.70" fill="#a9a9a9"/></g>
<path d="M111.10,591.76 V604.66 M115.20,592.76 H123.00 A3.00,2.73 0 0 1 123.00,598.21 H117.20 M123.00,598.21 A3.00,2.73 0 0 1 123.00,603.66 H115.20" stroke="#e0e0e0" stroke-width="2" fill="none"/>
<rect x="137.90" y="585.66" width="115.90" height="25.00" rx="3" fill="#8a8a8a" />
<clipPath id="c1400_5876"><rect x="140.00" y="587.66" width="87.20" height="21.00" rx="2"/></clipPath><g clip-path="url(#c1400_5876)" ><rect x="140.00" y="587.66" width="87.20" height="21.00" fill="#adadad"/><rect x="140.00" y="587.66" width="87.20" height="10.50" fill="#bdbdbd"/></g>
<clipPath id="c2272_5876"><rect x="227.20" y="587.66" width="24.80" height="21.00" rx="0"/></clipPath><g clip-path="url(#c2272_5876)" ><rect x="227.20" y="587.66" width="24.80" height="21.00" fill="#8f8f8f"/><rect x="227.20" y="587.66" width="24.80" height="10.50" fill="#a0a0a0"/></g>
<path d="M234,595.9599999999999 H246 L240,601.66 Z" fill="#bdbdbd"/>
<circle cx="273.2" cy="597.4599999999999" r="13.60" fill="#b9b9b9" filter="url(#blur1)"/>
<path d="M273.20,586.16 L273.97,585.67 L274.78,585.46 L275.56,585.59 L276.33,585.77 L277.09,586.00 L277.83,586.28 L278.43,586.86 L278.85,587.67 L279.77,587.63 L280.57,587.86 L281.18,588.36 L281.76,588.90 L282.30,589.48 L282.80,590.09 L283.03,590.89 L282.99,591.81 L283.80,592.23 L284.38,592.83 L284.66,593.57 L284.89,594.33 L285.07,595.10 L285.20,595.88 L284.99,596.69 L284.50,597.46 L284.99,598.23 L285.20,599.04 L285.07,599.82 L284.89,600.59 L284.66,601.35 L284.38,602.09 L283.80,602.69 L282.99,603.11 L283.03,604.03 L282.80,604.83 L282.30,605.44 L281.76,606.02 L281.18,606.56 L280.57,607.06 L279.77,607.29 L278.85,607.25 L278.43,608.06 L277.83,608.64 L277.09,608.92 L276.33,609.15 L275.56,609.33 L274.78,609.46 L273.97,609.25 L273.20,608.76 L272.43,609.25 L271.62,609.46 L270.84,609.33 L270.07,609.15 L269.31,608.92 L268.57,608.64 L267.97,608.06 L267.55,607.25 L266.63,607.29 L265.83,607.06 L265.22,606.56 L264.64,606.02 L264.10,605.44 L263.60,604.83 L263.37,604.03 L263.41,603.11 L262.60,602.69 L262.02,602.09 L261.74,601.35 L261.51,600.59 L261.33,599.82 L261.20,599.04 L261.41,598.23 L261.90,597.46 L261.41,596.69 L261.20,595.88 L261.33,595.10 L261.51,594.33 L261.74,593.57 L262.02,592.83 L262.60,592.23 L263.41,591.81 L263.37,590.89 L263.60,590.09 L264.10,589.48 L264.64,588.90 L265.22,588.36 L265.83,587.86 L266.63,587.63 L267.55,587.67 L267.97,586.86 L268.57,586.28 L269.31,586.00 L270.07,585.77 L270.84,585.59 L271.62,585.46 L272.43,585.67 Z" fill="url(#faceG)" stroke="#646464" stroke-width="1.3"/>
<circle cx="306.5" cy="597.4599999999999" r="13.60" fill="#b9b9b9" filter="url(#blur1)"/>
<path d="M306.50,586.16 L307.27,585.67 L308.08,585.46 L308.86,585.59 L309.63,585.77 L310.39,586.00 L311.13,586.28 L311.73,586.86 L312.15,587.67 L313.07,587.63 L313.87,587.86 L314.48,588.36 L315.06,588.90 L315.60,589.48 L316.10,590.09 L316.33,590.89 L316.29,591.81 L317.10,592.23 L317.68,592.83 L317.96,593.57 L318.19,594.33 L318.37,595.10 L318.50,595.88 L318.29,596.69 L317.80,597.46 L318.29,598.23 L318.50,599.04 L318.37,599.82 L318.19,600.59 L317.96,601.35 L317.68,602.09 L317.10,602.69 L316.29,603.11 L316.33,604.03 L316.10,604.83 L315.60,605.44 L315.06,606.02 L314.48,606.56 L313.87,607.06 L313.07,607.29 L312.15,607.25 L311.73,608.06 L311.13,608.64 L310.39,608.92 L309.63,609.15 L308.86,609.33 L308.08,609.46 L307.27,609.25 L306.50,608.76 L305.73,609.25 L304.92,609.46 L304.14,609.33 L303.37,609.15 L302.61,608.92 L301.87,608.64 L301.27,608.06 L300.85,607.25 L299.93,607.29 L299.13,607.06 L298.52,606.56 L297.94,606.02 L297.40,605.44 L296.90,604.83 L296.67,604.03 L296.71,603.11 L295.90,602.69 L295.32,602.09 L295.04,601.35 L294.81,600.59 L294.63,599.82 L294.50,599.04 L294.71,598.23 L295.20,597.46 L294.71,596.69 L294.50,595.88 L294.63,595.10 L294.81,594.33 L295.04,593.57 L295.32,592.83 L295.90,592.23 L296.71,591.81 L296.67,590.89 L296.90,590.09 L297.40,589.48 L297.94,588.90 L298.52,588.36 L299.13,587.86 L299.93,587.63 L300.85,587.67 L301.27,586.86 L301.87,586.28 L302.61,586.00 L303.37,585.77 L304.14,585.59 L304.92,585.46 L305.73,585.67 Z" fill="url(#faceG)" stroke="#646464" stroke-width="1.3"/>
<rect x="101.00" y="647.09" width="228.00" height="1.60" rx="0" fill="#808080" />
<rect x="105.50" y="617.09" width="28.00" height="27.50" rx="3" fill="#8e8e8e" />
<clipPath id="c1065_6180"><rect x="106.50" y="618.09" width="26.00" height="25.50" rx="2.5"/></clipPath><g clip-path="url(#c1065_6180)" ><rect x="106.50" y="618.09" width="26.00" height="25.50" fill="#9b9b9b"/><rect x="106.50" y="618.09" width="26.00" height="12.70" fill="#a9a9a9"/></g>
<path d="M111.10,624.69 V637.59 M122.98,625.69 L115.20,633.59 H126.00 M122.98,628.69 V636.59" stroke="#e0e0e0" stroke-width="2" fill="none"/>
<rect x="137.90" y="618.59" width="115.90" height="25.00" rx="3" fill="#8a8a8a" />
<clipPath id="c1400_6205"><rect x="140.00" y="620.59" width="87.20" height="21.00" rx="2"/></clipPath><g clip-path="url(#c1400_6205)" ><rect x="140.00" y="620.59" width="87.20" height="21.00" fill="#adadad"/><rect x="140.00" y="620.59" width="87.20" height="10.50" fill="#bdbdbd"/></g>
<clipPath id="c2272_6205"><rect x="227.20" y="620.59" width="24.80" height="21.00" rx="0"/></clipPath><g clip-path="url(#c2272_6205)" ><rect x="227.20" y="620.59" width="24.80" height="21.00" fill="#8f8f8f"/><rect x="227.20" y="620.59" width="24.80" height="10.50" fill="#a0a0a0"/></g>
<path d="M234,628.8899999999999 H246 L240,634.5899999999999 Z" fill="#bdbdbd"/>
<circle cx="273.2" cy="630.3899999999999" r="13.60" fill="#b9b9b9" filter="url(#blur1)"/>
<path d="M273.20,619.09 L273.97,618.60 L274.78,618.39 L275.56,618.52 L276.33,618.70 L277.09,618.93 L277.83,619.21 L278.43,619.79 L278.85,620.60 L279.77,620.56 L280.57,620.79 L281.18,621.29 L281.76,621.83 L282.30,622.41 L282.80,623.02 L283.03,623.82 L282.99,624.74 L283.80,625.16 L284.38,625.76 L284.66,626.50 L284.89,627.26 L285.07,628.03 L285.20,628.81 L284.99,629.62 L284.50,630.39 L284.99,631.16 L285.20,631.97 L285.07,632.75 L284.89,633.52 L284.66,634.28 L284.38,635.02 L283.80,635.62 L282.99,636.04 L283.03,636.96 L282.80,637.76 L282.30,638.37 L281.76,638.95 L281.18,639.49 L280.57,639.99 L279.77,640.22 L278.85,640.18 L278.43,640.99 L277.83,641.57 L277.09,641.85 L276.33,642.08 L275.56,642.26 L274.78,642.39 L273.97,642.18 L273.20,641.69 L272.43,642.18 L271.62,642.39 L270.84,642.26 L270.07,642.08 L269.31,641.85 L268.57,641.57 L267.97,640.99 L267.55,640.18 L266.63,640.22 L265.83,639.99 L265.22,639.49 L264.64,638.95 L264.10,638.37 L263.60,637.76 L263.37,636.96 L263.41,636.04 L262.60,635.62 L262.02,635.02 L261.74,634.28 L261.51,633.52 L261.33,632.75 L261.20,631.97 L261.41,631.16 L261.90,630.39 L261.41,629.62 L261.20,628.81 L261.33,628.03 L261.51,627.26 L261.74,626.50 L262.02,625.76 L262.60,625.16 L263.41,624.74 L263.37,623.82 L263.60,623.02 L264.10,622.41 L264.64,621.83 L265.22,621.29 L265.83,620.79 L266.63,620.56 L267.55,620.60 L267.97,619.79 L268.57,619.21 L269.31,618.93 L270.07,618.70 L270.84,618.52 L271.62,618.39 L272.43,618.60 Z" fill="url(#faceG)" stroke="#646464" stroke-width="1.3"/>
<circle cx="306.5" cy="630.3899999999999" r="13.60" fill="#b9b9b9" filter="url(#blur1)"/>
<path d="M306.50,619.09 L307.27,618.60 L308.08,618.39 L308.86,618.52 L309.63,618.70 L310.39,618.93 L311.13,619.21 L311.73,619.79 L312.15,620.60 L313.07,620.56 L313.87,620.79 L314.48,621.29 L315.06,621.83 L315.60,622.41 L316.10,623.02 L316.33,623.82 L316.29,624.74 L317.10,625.16 L317.68,625.76 L317.96,626.50 L318.19,627.26 L318.37,628.03 L318.50,628.81 L318.29,629.62 L317.80,630.39 L318.29,631.16 L318.50,631.97 L318.37,632.75 L318.19,633.52 L317.96,634.28 L317.68,635.02 L317.10,635.62 L316.29,636.04 L316.33,636.96 L316.10,637.76 L315.60,638.37 L315.06,638.95 L314.48,639.49 L313.87,639.99 L313.07,640.22 L312.15,640.18 L311.73,640.99 L311.13,641.57 L310.39,641.85 L309.63,642.08 L308.86,642.26 L308.08,642.39 L307.27,642.18 L306.50,641.69 L305.73,642.18 L304.92,642.39 L304.14,642.26 L303.37,642.08 L302.61,641.85 L301.87,641.57 L301.27,640.99 L300.85,640.18 L299.93,640.22 L299.13,639.99 L298.52,639.49 L297.94,638.95 L297.40,638.37 L296.90,637.76 L296.67,636.96 L296.71,636.04 L295.90,635.62 L295.32,635.02 L295.04,634.28 L294.81,633.52 L294.63,632.75 L294.50,631.97 L294.71,631.16 L295.20,630.39 L294.71,629.62 L294.50,628.81 L294.63,628.03 L294.81,627.26 L295.04,626.50 L295.32,625.76 L295.90,625.16 L296.71,624.74 L296.67,623.82 L296.90,623.02 L297.40,622.41 L297.94,621.83 L298.52,621.29 L299.13,620.79 L299.93,620.56 L300.85,620.60 L301.27,619.79 L301.87,619.21 L302.61,618.93 L303.37,618.70 L304.14,618.52 L304.92,618.39 L305.73,618.60 Z" fill="url(#faceG)" stroke="#646464" stroke-width="1.3"/>
<rect x="101.00" y="680.02" width="228.00" height="1.60" rx="0" fill="#808080" />
<rect x="105.50" y="650.02" width="28.00" height="27.50" rx="3" fill="#8e8e8e" />
<clipPath id="c1065_6510"><rect x="106.50" y="651.02" width="26.00" height="25.50" rx="2.5"/></clipPath><g clip-path="url(#c1065_6510)" ><rect x="106.50" y="651.02" width="26.00" height="25.50" fill="#9b9b9b"/><rect x="106.50" y="651.02" width="26.00" height="12.70" fill="#a9a9a9"/></g>
<path d="M111.10,657.62 V670.52 M126.00,658.62 H115.20 V664.07 H123.00 A3.00,2.72 0 0 1 123.00,669.52 H115.20" stroke="#e0e0e0" stroke-width="2" fill="none"/>
<rect x="137.90" y="651.52" width="115.90" height="25.00" rx="3" fill="#8a8a8a" />
<clipPath id="c1400_6535"><rect x="140.00" y="653.52" width="87.20" height="21.00" rx="2"/></clipPath><g clip-path="url(#c1400_6535)" ><rect x="140.00" y="653.52" width="87.20" height="21.00" fill="#adadad"/><rect x="140.00" y="653.52" width="87.20" height="10.50" fill="#bdbdbd"/></g>
<clipPath id="c2272_6535"><rect x="227.20" y="653.52" width="24.80" height="21.00" rx="0"/></clipPath><g clip-path="url(#c2272_6535)" ><rect x="227.20" y="653.52" width="24.80" height="21.00" fill="#8f8f8f"/><rect x="227.20" y="653.52" width="24.80" height="10.50" fill="#a0a0a0"/></g>
<path d="M234,661.8199999999999 H246 L240,667.52 Z" fill="#bdbdbd"/>
<circle cx="273.2" cy="663.3199999999999" r="13.60" fill="#b9b9b9" filter="url(#blur1)"/>
<path d="M273.20,652.02 L273.97,651.53 L274.78,651.32 L275.56,651.45 L276.33,651.63 L277.09,651.86 L277.83,652.14 L278.43,652.72 L278.85,653.53 L279.77,653.49 L280.57,653.72 L281.18,654.22 L281.76,654.76 L282.30,655.34 L282.80,655.95 L283.03,656.75 L282.99,657.67 L283.80,658.09 L284.38,658.69 L284.66,659.43 L284.89,660.19 L285.07,660.96 L285.20,661.74 L284.99,662.55 L284.50,663.32 L284.99,664.09 L285.20,664.90 L285.07,665.68 L284.89,666.45 L284.66,667.21 L284.38,667.95 L283.80,668.55 L282.99,668.97 L283.03,669.89 L282.80,670.69 L282.30,671.30 L281.76,671.88 L281.18,672.42 L280.57,672.92 L279.77,673.15 L278.85,673.11 L278.43,673.92 L277.83,674.50 L277.09,674.78 L276.33,675.01 L275.56,675.19 L274.78,675.32 L273.97,675.11 L273.20,674.62 L272.43,675.11 L271.62,675.32 L270.84,675.19 L270.07,675.01 L269.31,674.78 L268.57,674.50 L267.97,673.92 L267.55,673.11 L266.63,673.15 L265.83,672.92 L265.22,672.42 L264.64,671.88 L264.10,671.30 L263.60,670.69 L263.37,669.89 L263.41,668.97 L262.60,668.55 L262.02,667.95 L261.74,667.21 L261.51,666.45 L261.33,665.68 L261.20,664.90 L261.41,664.09 L261.90,663.32 L261.41,662.55 L261.20,661.74 L261.33,660.96 L261.51,660.19 L261.74,659.43 L262.02,658.69 L262.60,658.09 L263.41,657.67 L263.37,656.75 L263.60,655.95 L264.10,655.34 L264.64,654.76 L265.22,654.22 L265.83,653.72 L266.63,653.49 L267.55,653.53 L267.97,652.72 L268.57,652.14 L269.31,651.86 L270.07,651.63 L270.84,651.45 L271.62,651.32 L272.43,651.53 Z" fill="url(#faceG)" stroke="#646464" stroke-width="1.3"/>
<circle cx="306.5" cy="663.3199999999999" r="13.60" fill="#b9b9b9" filter="url(#blur1)"/>
<path d="M306.50,652.02 L307.27,651.53 L308.08,651.32 L308.86,651.45 L309.63,651.63 L310.39,651.86 L311.13,652.14 L311.73,652.72 L312.15,653.53 L313.07,653.49 L313.87,653.72 L314.48,654.22 L315.06,654.76 L315.60,655.34 L316.10,655.95 L316.33,656.75 L316.29,657.67 L317.10,658.09 L317.68,658.69 L317.96,659.43 L318.19,660.19 L318.37,660.96 L318.50,661.74 L318.29,662.55 L317.80,663.32 L318.29,664.09 L318.50,664.90 L318.37,665.68 L318.19,666.45 L317.96,667.21 L317.68,667.95 L317.10,668.55 L316.29,668.97 L316.33,669.89 L316.10,670.69 L315.60,671.30 L315.06,671.88 L314.48,672.42 L313.87,672.92 L313.07,673.15 L312.15,673.11 L311.73,673.92 L311.13,674.50 L310.39,674.78 L309.63,675.01 L308.86,675.19 L308.08,675.32 L307.27,675.11 L306.50,674.62 L305.73,675.11 L304.92,675.32 L304.14,675.19 L303.37,675.01 L302.61,674.78 L301.87,674.50 L301.27,673.92 L300.85,673.11 L299.93,673.15 L299.13,672.92 L298.52,672.42 L297.94,671.88 L297.40,671.30 L296.90,670.69 L296.67,669.89 L296.71,668.97 L295.90,668.55 L295.32,667.95 L295.04,667.21 L294.81,666.45 L294.63,665.68 L294.50,664.90 L294.71,664.09 L295.20,663.32 L294.71,662.55 L294.50,661.74 L294.63,660.96 L294.81,660.19 L295.04,659.43 L295.32,658.69 L295.90,658.09 L296.71,657.67 L296.67,656.75 L296.90,655.95 L297.40,655.34 L297.94,654.76 L298.52,654.22 L299.13,653.72 L299.93,653.49 L300.85,653.53 L301.27,652.72 L301.87,652.14 L302.61,651.86 L303.37,651.63 L304.14,651.45 L304.92,651.32 L305.73,651.53 Z" fill="url(#faceG)" stroke="#646464" stroke-width="1.3"/>
<rect x="105.50" y="682.95" width="28.00" height="27.50" rx="3" fill="#8e8e8e" />
<clipPath id="c1065_6839"><rect x="106.50" y="683.95" width="26.00" height="25.50" rx="2.5"/></clipPath><g clip-path="url(#c1065_6839)" ><rect x="106.50" y="683.95" width="26.00" height="25.50" fill="#9b9b9b"/><rect x="106.50" y="683.95" width="26.00" height="12.70" fill="#a9a9a9"/></g>
<path d="M111.10,690.55 V703.45 M126.00,691.55 H118.20 A3.00,3.00 0 0 0 115.20,694.55 V699.73 A3.00,2.72 0 0 0 118.20,702.45 H123.00 A3.00,2.72 0 0 0 123.00,697.00 H115.20" stroke="#e0e0e0" stroke-width="2" fill="none"/>
<rect x="137.90" y="684.45" width="115.90" height="25.00" rx="3" fill="#8a8a8a" />
<clipPath id="c1400_6864"><rect x="140.00" y="686.45" width="87.20" height="21.00" rx="2"/></clipPath><g clip-path="url(#c1400_6864)" ><rect x="140.00" y="686.45" width="87.20" height="21.00" fill="#adadad"/><rect x="140.00" y="686.45" width="87.20" height="10.50" fill="#bdbdbd"/></g>
<clipPath id="c2272_6864"><rect x="227.20" y="686.45" width="24.80" height="21.00" rx="0"/></clipPath><g clip-path="url(#c2272_6864)" ><rect x="227.20" y="686.45" width="24.80" height="21.00" fill="#8f8f8f"/><rect x="227.20" y="686.45" width="24.80" height="10.50" fill="#a0a0a0"/></g>
<path d="M234,694.75 H246 L240,700.45 Z" fill="#bdbdbd"/>
<circle cx="273.2" cy="696.25" r="13.60" fill="#b9b9b9" filter="url(#blur1)"/>
<path d="M273.20,684.95 L273.97,684.46 L274.78,684.25 L275.56,684.38 L276.33,684.56 L277.09,684.79 L277.83,685.07 L278.43,685.65 L278.85,686.46 L279.77,686.42 L280.57,686.65 L281.18,687.15 L281.76,687.69 L282.30,688.27 L282.80,688.88 L283.03,689.68 L282.99,690.60 L283.80,691.02 L284.38,691.62 L284.66,692.36 L284.89,693.12 L285.07,693.89 L285.20,694.67 L284.99,695.48 L284.50,696.25 L284.99,697.02 L285.20,697.83 L285.07,698.61 L284.89,699.38 L284.66,700.14 L284.38,700.88 L283.80,701.48 L282.99,701.90 L283.03,702.82 L282.80,703.62 L282.30,704.23 L281.76,704.81 L281.18,705.35 L280.57,705.85 L279.77,706.08 L278.85,706.04 L278.43,706.85 L277.83,707.43 L277.09,707.71 L276.33,707.94 L275.56,708.12 L274.78,708.25 L273.97,708.04 L273.20,707.55 L272.43,708.04 L271.62,708.25 L270.84,708.12 L270.07,707.94 L269.31,707.71 L268.57,707.43 L267.97,706.85 L267.55,706.04 L266.63,706.08 L265.83,705.85 L265.22,705.35 L264.64,704.81 L264.10,704.23 L263.60,703.62 L263.37,702.82 L263.41,701.90 L262.60,701.48 L262.02,700.88 L261.74,700.14 L261.51,699.38 L261.33,698.61 L261.20,697.83 L261.41,697.02 L261.90,696.25 L261.41,695.48 L261.20,694.67 L261.33,693.89 L261.51,693.12 L261.74,692.36 L262.02,691.62 L262.60,691.02 L263.41,690.60 L263.37,689.68 L263.60,688.88 L264.10,688.27 L264.64,687.69 L265.22,687.15 L265.83,686.65 L266.63,686.42 L267.55,686.46 L267.97,685.65 L268.57,685.07 L269.31,684.79 L270.07,684.56 L270.84,684.38 L271.62,684.25 L272.43,684.46 Z" fill="url(#faceG)" stroke="#646464" stroke-width="1.3"/>
<circle cx="306.5" cy="696.25" r="13.60" fill="#b9b9b9" filter="url(#blur1)"/>
<path d="M306.50,684.95 L307.27,684.46 L308.08,684.25 L308.86,684.38 L309.63,684.56 L310.39,684.79 L311.13,685.07 L311.73,685.65 L312.15,686.46 L313.07,686.42 L313.87,686.65 L314.48,687.15 L315.06,687.69 L315.60,688.27 L316.10,688.88 L316.33,689.68 L316.29,690.60 L317.10,691.02 L317.68,691.62 L317.96,692.36 L318.19,693.12 L318.37,693.89 L318.50,694.67 L318.29,695.48 L317.80,696.25 L318.29,697.02 L318.50,697.83 L318.37,698.61 L318.19,699.38 L317.96,700.14 L317.68,700.88 L317.10,701.48 L316.29,701.90 L316.33,702.82 L316.10,703.62 L315.60,704.23 L315.06,704.81 L314.48,705.35 L313.87,705.85 L313.07,706.08 L312.15,706.04 L311.73,706.85 L311.13,707.43 L310.39,707.71 L309.63,707.94 L308.86,708.12 L308.08,708.25 L307.27,708.04 L306.50,707.55 L305.73,708.04 L304.92,708.25 L304.14,708.12 L303.37,707.94 L302.61,707.71 L301.87,707.43 L301.27,706.85 L300.85,706.04 L299.93,706.08 L299.13,705.85 L298.52,705.35 L297.94,704.81 L297.40,704.23 L296.90,703.62 L296.67,702.82 L296.71,701.90 L295.90,701.48 L295.32,700.88 L295.04,700.14 L294.81,699.38 L294.63,698.61 L294.50,697.83 L294.71,697.02 L295.20,696.25 L294.71,695.48 L294.50,694.67 L294.63,693.89 L294.81,693.12 L295.04,692.36 L295.32,691.62 L295.90,691.02 L296.71,690.60 L296.67,689.68 L296.90,688.88 L297.40,688.27 L297.94,687.69 L298.52,687.15 L299.13,686.65 L299.93,686.42 L300.85,686.46 L301.27,685.65 L301.87,685.07 L302.61,684.79 L303.37,684.56 L304.14,684.38 L304.92,684.25 L305.73,684.46 Z" fill="url(#faceG)" stroke="#646464" stroke-width="1.3"/>
<rect x="104.80" y="721.60" width="217.20" height="27.40" rx="3" fill="#1f1f1f" stroke="#474747" stroke-width="1"/>
<clipPath id="c1074_7239"><rect x="107.40" y="723.90" width="104.20" height="22.50" rx="2"/></clipPath><g clip-path="url(#c1074_7239)" ><rect x="107.40" y="723.90" width="104.20" height="22.50" fill="#bccde2"/><rect x="107.40" y="723.90" width="104.20" height="11.60" fill="#d5e5f7"/></g>
<clipPath id="c2147_7239"><rect x="214.70" y="723.90" width="105.50" height="22.50" rx="2"/></clipPath><g clip-path="url(#c2147_7239)" ><rect x="214.70" y="723.90" width="105.50" height="22.50" fill="#6d6d6d"/><rect x="214.70" y="723.90" width="105.50" height="11.60" fill="#9c9c9c"/></g>
<text x="129.6" y="741.2" font-family="Liberation Sans" font-size="18.17" font-weight="normal" fill="#4d6d92" text-anchor="start" textLength="59.8" lengthAdjust="spacingAndGlyphs" stroke="#4d6d92" stroke-width="0.6">SINGLE</text>
<text x="241.5" y="741.2" font-family="Liberation Sans" font-size="18.17" font-weight="normal" fill="#fafafa" text-anchor="start" textLength="52.6" lengthAdjust="spacingAndGlyphs" stroke="#fafafa" stroke-width="0.6">MULTI</text>
<text x="119.0" y="760.7" font-family="Liberation Sans" font-size="10.61" font-weight="normal" fill="#2a8ee6" text-anchor="start" textLength="186.4" lengthAdjust="spacingAndGlyphs" >To donate: https://paypal.me/dsp56300</text>
<rect x="119.00" y="762.00" width="186.40" height="1.00" rx="0" fill="#2a8ee6" />
<rect x="345.90" y="137.00" width="981.30" height="38.50" rx="4" fill="#2b2b2b" />
<clipPath id="c3494_1405"><rect x="349.40" y="140.50" width="94.00" height="33.00" rx="3"/></clipPath><g clip-path="url(#c3494_1405)" ><rect x="349.40" y="140.50" width="94.00" height="33.00" fill="#c3d3e5"/><rect x="349.40" y="140.50" width="94.00" height="16.50" fill="#d6e6f8"/></g>
<text x="375.2" y="163.8" font-family="Liberation Sans" font-size="19.77" font-weight="normal" fill="#4f6f92" text-anchor="start" textLength="41.5" lengthAdjust="spacingAndGlyphs" stroke="#4f6f92" stroke-width="0.45">MAIN</text>
<clipPath id="c4472_1405"><rect x="447.25" y="140.50" width="94.00" height="33.00" rx="3"/></clipPath><g clip-path="url(#c4472_1405)" ><rect x="447.25" y="140.50" width="94.00" height="33.00" fill="#6f6f6f"/><rect x="447.25" y="140.50" width="94.00" height="16.50" fill="#9d9d9d"/></g>
<text x="454.0" y="163.8" font-family="Liberation Sans" font-size="19.77" font-weight="normal" fill="#f6f6f6" text-anchor="start" textLength="81.3" lengthAdjust="spacingAndGlyphs" stroke="#f6f6f6" stroke-width="0.45">BROWSER</text>
<clipPath id="c5450_1405"><rect x="545.10" y="140.50" width="94.00" height="33.00" rx="3"/></clipPath><g clip-path="url(#c5450_1405)" ><rect x="545.10" y="140.50" width="94.00" height="33.00" fill="#6f6f6f"/><rect x="545.10" y="140.50" width="94.00" height="16.50" fill="#9d9d9d"/></g>
<text x="575.8" y="163.8" font-family="Liberation Sans" font-size="19.77" font-weight="normal" fill="#f6f6f6" text-anchor="start" textLength="33.2" lengthAdjust="spacingAndGlyphs" stroke="#f6f6f6" stroke-width="0.45">OSC</text>
<clipPath id="c6429_1405"><rect x="642.95" y="140.50" width="94.00" height="33.00" rx="3"/></clipPath><g clip-path="url(#c6429_1405)" ><rect x="642.95" y="140.50" width="94.00" height="33.00" fill="#6f6f6f"/><rect x="642.95" y="140.50" width="94.00" height="16.50" fill="#9d9d9d"/></g>
<text x="663.2" y="163.8" font-family="Liberation Sans" font-size="19.77" font-weight="normal" fill="#f6f6f6" text-anchor="start" textLength="52.8" lengthAdjust="spacingAndGlyphs" stroke="#f6f6f6" stroke-width="0.45">FILTER</text>
<clipPath id="c7408_1405"><rect x="740.80" y="140.50" width="94.00" height="33.00" rx="3"/></clipPath><g clip-path="url(#c7408_1405)" ><rect x="740.80" y="140.50" width="94.00" height="33.00" fill="#6f6f6f"/><rect x="740.80" y="140.50" width="94.00" height="16.50" fill="#9d9d9d"/></g>
<text x="772.7" y="163.8" font-family="Liberation Sans" font-size="19.77" font-weight="normal" fill="#f6f6f6" text-anchor="start" textLength="28.9" lengthAdjust="spacingAndGlyphs" stroke="#f6f6f6" stroke-width="0.45">LFO</text>
<clipPath id="c8386_1405"><rect x="838.65" y="140.50" width="94.00" height="33.00" rx="3"/></clipPath><g clip-path="url(#c8386_1405)" ><rect x="838.65" y="140.50" width="94.00" height="33.00" fill="#6f6f6f"/><rect x="838.65" y="140.50" width="94.00" height="16.50" fill="#9d9d9d"/></g>
<text x="852.6" y="163.8" font-family="Liberation Sans" font-size="19.77" font-weight="normal" fill="#f6f6f6" text-anchor="start" textLength="64.7" lengthAdjust="spacingAndGlyphs" stroke="#f6f6f6" stroke-width="0.45">MATRIX</text>
<clipPath id="c9364_1405"><rect x="936.50" y="140.50" width="94.00" height="33.00" rx="3"/></clipPath><g clip-path="url(#c9364_1405)" ><rect x="936.50" y="140.50" width="94.00" height="33.00" fill="#6f6f6f"/><rect x="936.50" y="140.50" width="94.00" height="16.50" fill="#9d9d9d"/></g>
<text x="966.5" y="163.8" font-family="Liberation Sans" font-size="19.77" font-weight="normal" fill="#f6f6f6" text-anchor="start" textLength="33.8" lengthAdjust="spacingAndGlyphs" stroke="#f6f6f6" stroke-width="0.45">ARP</text>
<clipPath id="c10343_1405"><rect x="1034.35" y="140.50" width="94.00" height="33.00" rx="3"/></clipPath><g clip-path="url(#c10343_1405)" ><rect x="1034.35" y="140.50" width="94.00" height="33.00" fill="#6f6f6f"/><rect x="1034.35" y="140.50" width="94.00" height="16.50" fill="#9d9d9d"/></g>
<text x="1064.9" y="163.8" font-family="Liberation Sans" font-size="19.77" font-weight="normal" fill="#f6f6f6" text-anchor="start" textLength="32.6" lengthAdjust="spacingAndGlyphs" stroke="#f6f6f6" stroke-width="0.45">FX 1</text>
<clipPath id="c11321_1405"><rect x="1132.20" y="140.50" width="94.00" height="33.00" rx="3"/></clipPath><g clip-path="url(#c11321_1405)" ><rect x="1132.20" y="140.50" width="94.00" height="33.00" fill="#6f6f6f"/><rect x="1132.20" y="140.50" width="94.00" height="16.50" fill="#9d9d9d"/></g>
<text x="1158.7" y="163.8" font-family="Liberation Sans" font-size="19.77" font-weight="normal" fill="#f6f6f6" text-anchor="start" textLength="40.3" lengthAdjust="spacingAndGlyphs" stroke="#f6f6f6" stroke-width="0.45">FX 2</text>
<clipPath id="c12300_1405"><rect x="1230.05" y="140.50" width="94.00" height="33.00" rx="3"/></clipPath><g clip-path="url(#c12300_1405)" ><rect x="1230.05" y="140.50" width="94.00" height="33.00" fill="#6f6f6f"/><rect x="1230.05" y="140.50" width="94.00" height="16.50" fill="#9d9d9d"/></g>
<text x="1239.6" y="163.8" font-family="Liberation Sans" font-size="19.77" font-weight="normal" fill="#f6f6f6" text-anchor="start" textLength="74.9" lengthAdjust="spacingAndGlyphs" stroke="#f6f6f6" stroke-width="0.45">COMMON</text>
<rect x="346.00" y="189.00" width="982.00" height="292.00" rx="8" fill="#a6a6a6" />
<rect x="346.00" y="189.00" width="982.00" height="292.00" rx="8" fill="#fff" filter="url(#noiseW)" opacity="0.12"/>
<path d="M408.3,189 H1266.7 Q1266.7,189 1266.7,189 V209.5 Q1266.7,217.5 1258.7,217.5 H416.3 Q408.3,217.5 408.3,209.5 V189 Q408.3,189 408.3,189 Z" fill="#4a4a4a"/>
<text x="778.9" y="210.0" font-family="Liberation Sans" font-size="20.20" font-weight="normal" fill="#f8f8f8" text-anchor="start" textLength="58.4" lengthAdjust="spacingAndGlyphs" >EASY</text>
<text x="849.1" y="210.0" font-family="Liberation Sans" font-size="20.20" font-weight="normal" fill="#f8f8f8" text-anchor="start" textLength="45.9" lengthAdjust="spacingAndGlyphs" >EDIT</text>
<rect x="356" y="242" width="962" height="203" rx="30" fill="#000" opacity="0.35" filter="url(#blur4)"/>
<rect x="358.00" y="244.00" width="958.00" height="199.00" rx="30" fill="#dfdfde" />
<path d="M408.5,244 H746 Q746,244 746,244 V258.3 Q746,262.3 742,262.3 H412.5 Q408.5,262.3 408.5,258.3 V244 Q408.5,244 408.5,244 Z" fill="#4a4a4a"/>
<path d="M790,244 H1065 Q1065,244 1065,244 V258.3 Q1065,262.3 1061,262.3 H794 Q790,262.3 790,258.3 V244 Q790,244 790,244 Z" fill="#4a4a4a"/>
<path d="M1116,244 H1267 Q1267,244 1267,244 V258.3 Q1267,262.3 1263,262.3 H1120 Q1116,262.3 1116,258.3 V244 Q1116,244 1116,244 Z" fill="#4a4a4a"/>
<text x="547.7" y="257.6" font-family="Liberation Sans" font-size="13.95" font-weight="normal" fill="#f4f4f4" text-anchor="start" textLength="60.7" lengthAdjust="spacingAndGlyphs" >VOLUME</text>
<text x="903.5" y="257.8" font-family="Liberation Sans" font-size="14.10" font-weight="normal" fill="#f4f4f4" text-anchor="start" textLength="47.5" lengthAdjust="spacingAndGlyphs" >FILTER</text>
<text x="1154.0" y="257.6" font-family="Liberation Sans" font-size="13.23" font-weight="normal" fill="#f4f4f4" text-anchor="start" textLength="75.0" lengthAdjust="spacingAndGlyphs" >ENVELOPE</text>
<rect x="788" y="271" width="279" height="147" rx="71" fill="#000" opacity="0.3" filter="url(#blur2)"/>
<rect x="790.40" y="272.50" width="274.20" height="142.80" rx="71" fill="#c6c7cb" />
<g transform="translate(0,282.90) scale(1,0.8)" stroke="#dcdcdc" stroke-width="4.0" fill="none"><ellipse cx="860.42" cy="11.25" rx="11.82" ry="9.25"/><path d="M898.77,2.00 H882.08 A4.16,4.62 0 0 0 882.08,11.25 H892.61 A4.16,4.62 0 0 1 892.61,20.50 H875.91"/><path d="M935.38,22.50 V2.00 H950.87 A4.16,4.62 0 0 1 950.87,11.25 H935.38 M949.42,11.25 Q955.76,11.25 955.76,22.50"/><path d="M962.37,0.00 V11.25 A9.36,9.25 0 0 0 981.08,11.25 V0.00"/><path d="M1007.90,2.00 H990.92 A4.16,4.62 0 0 0 990.92,11.25 H1001.74 A4.16,4.62 0 0 1 1001.74,20.50 H984.75"/></g>
<g transform="translate(0,282.90) scale(1,0.8)" stroke="#a4a4a4" stroke-width="4.0" fill="none"><path d="M900.80,2.00 H924.75 M912.77,0.00 V22.50"/><path d="M929.28,0.00 V22.50"/></g>
<text x="905.5" y="340.2" font-family="Liberation Sans" font-size="8.58" font-weight="normal" fill="#e6e6e6" text-anchor="start" textLength="43.3" lengthAdjust="spacingAndGlyphs" >DSP56K</text>
<text x="916.0" y="352.3" font-family="Liberation Sans" font-size="8.43" font-weight="normal" fill="#e6e6e6" text-anchor="start" textLength="23.1" lengthAdjust="spacingAndGlyphs" >EMU</text>
<circle cx="471.10" cy="327.20" r="28.05" fill="#000" opacity="0.55" filter="url(#blur7)"/>
<circle cx="454.6" cy="343.7" r="33" fill="#2b2b2b"/>
<path d="M454.6,343.7 L477.93,367.03 A33,33 0 0 1 431.27,367.03 Z" fill="#040404"/>
<path d="M433.37,364.93 A30.03,30.03 0 1 1 480.61,328.69" stroke="#62bef7" stroke-width="4.62" fill="none"/>
<circle cx="454.6" cy="343.7" r="26.40" fill="#8a8a8a"/>
<circle cx="454.6" cy="343.7" r="23.59" fill="url(#face)"/>
<circle cx="457.84" cy="320.66" r="2.64" fill="#262626" opacity="0.75"/>
<circle cx="467.51" cy="324.35" r="2.64" fill="#262626" opacity="0.75"/>
<circle cx="474.63" cy="331.87" r="2.64" fill="#262626" opacity="0.75"/>
<circle cx="477.78" cy="341.73" r="2.64" fill="#262626" opacity="0.75"/>
<circle cx="476.34" cy="351.98" r="2.64" fill="#262626" opacity="0.75"/>
<circle cx="470.59" cy="360.60" r="2.64" fill="#262626" opacity="0.75"/>
<circle cx="461.68" cy="365.86" r="2.64" fill="#262626" opacity="0.75"/>
<circle cx="451.36" cy="366.74" r="2.64" fill="#262626" opacity="0.75"/>
<circle cx="441.69" cy="363.05" r="2.64" fill="#262626" opacity="0.75"/>
<circle cx="434.57" cy="355.53" r="2.64" fill="#262626" opacity="0.75"/>
<circle cx="431.42" cy="345.67" r="2.64" fill="#262626" opacity="0.75"/>
<circle cx="432.86" cy="335.42" r="2.64" fill="#262626" opacity="0.75"/>
<circle cx="438.61" cy="326.80" r="2.64" fill="#262626" opacity="0.75"/>
<circle cx="447.52" cy="321.54" r="2.64" fill="#262626" opacity="0.75"/>
<circle cx="454.6" cy="343.7" r="25.00" fill="none" stroke="#8a8a8a" stroke-width="2.81"/>
<path d="M455.45,343.19 L470.97,333.78" stroke="#e8e8e8" stroke-width="5.45" stroke-linecap="round"/>
<circle cx="594.50" cy="327.20" r="28.05" fill="#000" opacity="0.55" filter="url(#blur7)"/>
<circle cx="578" cy="343.7" r="33" fill="#2b2b2b"/>
<path d="M578,343.7 L601.33,367.03 A33,33 0 0 1 554.67,367.03 Z" fill="#040404"/>
<path d="M556.77,364.93 A30.03,30.03 0 0 1 584.24,314.33" stroke="#62bef7" stroke-width="4.62" fill="none"/>
<circle cx="578" cy="343.7" r="26.40" fill="#8a8a8a"/>
<circle cx="578" cy="343.7" r="23.59" fill="url(#face)"/>
<circle cx="581.24" cy="320.66" r="2.64" fill="#262626" opacity="0.75"/>
<circle cx="590.91" cy="324.35" r="2.64" fill="#262626" opacity="0.75"/>
<circle cx="598.03" cy="331.87" r="2.64" fill="#262626" opacity="0.75"/>
<circle cx="601.18" cy="341.73" r="2.64" fill="#262626" opacity="0.75"/>
<circle cx="599.74" cy="351.98" r="2.64" fill="#262626" opacity="0.75"/>
<circle cx="593.99" cy="360.60" r="2.64" fill="#262626" opacity="0.75"/>
<circle cx="585.08" cy="365.86" r="2.64" fill="#262626" opacity="0.75"/>
<circle cx="574.76" cy="366.74" r="2.64" fill="#262626" opacity="0.75"/>
<circle cx="565.09" cy="363.05" r="2.64" fill="#262626" opacity="0.75"/>
<circle cx="557.97" cy="355.53" r="2.64" fill="#262626" opacity="0.75"/>
<circle cx="554.82" cy="345.67" r="2.64" fill="#262626" opacity="0.75"/>
<circle cx="556.26" cy="335.42" r="2.64" fill="#262626" opacity="0.75"/>
<circle cx="562.01" cy="326.80" r="2.64" fill="#262626" opacity="0.75"/>
<circle cx="570.92" cy="321.54" r="2.64" fill="#262626" opacity="0.75"/>
<circle cx="578" cy="343.7" r="25.00" fill="none" stroke="#8a8a8a" stroke-width="2.81"/>
<path d="M578.20,342.73 L581.95,324.97" stroke="#e8e8e8" stroke-width="5.45" stroke-linecap="round"/>
<circle cx="717.50" cy="327.20" r="28.05" fill="#000" opacity="0.55" filter="url(#blur7)"/>
<circle cx="701" cy="343.7" r="33" fill="#2b2b2b"/>
<path d="M701,343.7 L724.33,367.03 A33,33 0 0 1 677.67,367.03 Z" fill="#040404"/>
<path d="M679.77,364.93 A30.03,30.03 0 0 1 689.75,315.86" stroke="#62bef7" stroke-width="4.62" fill="none"/>
<circle cx="701" cy="343.7" r="26.40" fill="#8a8a8a"/>
<circle cx="701" cy="343.7" r="23.59" fill="url(#face)"/>
<circle cx="704.24" cy="320.66" r="2.64" fill="#262626" opacity="0.75"/>
<circle cx="713.91" cy="324.35" r="2.64" fill="#262626" opacity="0.75"/>
<circle cx="721.03" cy="331.87" r="2.64" fill="#262626" opacity="0.75"/>
<circle cx="724.18" cy="341.73" r="2.64" fill="#262626" opacity="0.75"/>
<circle cx="722.74" cy="351.98" r="2.64" fill="#262626" opacity="0.75"/>
<circle cx="716.99" cy="360.60" r="2.64" fill="#262626" opacity="0.75"/>
<circle cx="708.08" cy="365.86" r="2.64" fill="#262626" opacity="0.75"/>
<circle cx="697.76" cy="366.74" r="2.64" fill="#262626" opacity="0.75"/>
<circle cx="688.09" cy="363.05" r="2.64" fill="#262626" opacity="0.75"/>
<circle cx="680.97" cy="355.53" r="2.64" fill="#262626" opacity="0.75"/>
<circle cx="677.82" cy="345.67" r="2.64" fill="#262626" opacity="0.75"/>
<circle cx="679.26" cy="335.42" r="2.64" fill="#262626" opacity="0.75"/>
<circle cx="685.01" cy="326.80" r="2.64" fill="#262626" opacity="0.75"/>
<circle cx="693.92" cy="321.54" r="2.64" fill="#262626" opacity="0.75"/>
<circle cx="701" cy="343.7" r="25.00" fill="none" stroke="#8a8a8a" stroke-width="2.81"/>
<path d="M700.62,342.78 L693.74,325.99" stroke="#e8e8e8" stroke-width="5.45" stroke-linecap="round"/>
<circle cx="882.70" cy="327.40" r="28.05" fill="#000" opacity="0.55" filter="url(#blur7)"/>
<circle cx="866.2" cy="343.9" r="33" fill="#2b2b2b"/>
<path d="M866.2,343.9 L889.53,367.23 A33,33 0 0 1 842.87,367.23 Z" fill="#040404"/>
<path d="M844.97,365.13 A30.03,30.03 0 0 1 876.47,315.68" stroke="#62bef7" stroke-width="4.62" fill="none"/>
<circle cx="866.2" cy="343.9" r="26.40" fill="#8a8a8a"/>
<circle cx="866.2" cy="343.9" r="23.59" fill="url(#face)"/>
<circle cx="869.44" cy="320.86" r="2.64" fill="#262626" opacity="0.75"/>
<circle cx="879.11" cy="324.55" r="2.64" fill="#262626" opacity="0.75"/>
<circle cx="886.23" cy="332.07" r="2.64" fill="#262626" opacity="0.75"/>
<circle cx="889.38" cy="341.93" r="2.64" fill="#262626" opacity="0.75"/>
<circle cx="887.94" cy="352.18" r="2.64" fill="#262626" opacity="0.75"/>
<circle cx="882.19" cy="360.80" r="2.64" fill="#262626" opacity="0.75"/>
<circle cx="873.28" cy="366.06" r="2.64" fill="#262626" opacity="0.75"/>
<circle cx="862.96" cy="366.94" r="2.64" fill="#262626" opacity="0.75"/>
<circle cx="853.29" cy="363.25" r="2.64" fill="#262626" opacity="0.75"/>
<circle cx="846.17" cy="355.73" r="2.64" fill="#262626" opacity="0.75"/>
<circle cx="843.02" cy="345.87" r="2.64" fill="#262626" opacity="0.75"/>
<circle cx="844.46" cy="335.62" r="2.64" fill="#262626" opacity="0.75"/>
<circle cx="850.21" cy="327.00" r="2.64" fill="#262626" opacity="0.75"/>
<circle cx="859.12" cy="321.74" r="2.64" fill="#262626" opacity="0.75"/>
<circle cx="866.2" cy="343.9" r="25.00" fill="none" stroke="#8a8a8a" stroke-width="2.81"/>
<path d="M866.58,342.99 L873.59,326.24" stroke="#e8e8e8" stroke-width="5.45" stroke-linecap="round"/>
<circle cx="1005.50" cy="327.40" r="28.05" fill="#000" opacity="0.55" filter="url(#blur7)"/>
<circle cx="989" cy="343.9" r="33" fill="#2b2b2b"/>
<path d="M989,343.9 L1012.33,367.23 A33,33 0 0 1 965.67,367.23 Z" fill="#040404"/>
<path d="M967.77,365.13 A30.03,30.03 0 0 1 959.63,337.66" stroke="#62bef7" stroke-width="4.62" fill="none"/>
<circle cx="989" cy="343.9" r="26.40" fill="#8a8a8a"/>
<circle cx="989" cy="343.9" r="23.59" fill="url(#face)"/>
<circle cx="992.24" cy="320.86" r="2.64" fill="#262626" opacity="0.75"/>
<circle cx="1001.91" cy="324.55" r="2.64" fill="#262626" opacity="0.75"/>
<circle cx="1009.03" cy="332.07" r="2.64" fill="#262626" opacity="0.75"/>
<circle cx="1012.18" cy="341.93" r="2.64" fill="#262626" opacity="0.75"/>
<circle cx="1010.74" cy="352.18" r="2.64" fill="#262626" opacity="0.75"/>
<circle cx="1004.99" cy="360.80" r="2.64" fill="#262626" opacity="0.75"/>
<circle cx="996.08" cy="366.06" r="2.64" fill="#262626" opacity="0.75"/>
<circle cx="985.76" cy="366.94" r="2.64" fill="#262626" opacity="0.75"/>
<circle cx="976.09" cy="363.25" r="2.64" fill="#262626" opacity="0.75"/>
<circle cx="968.97" cy="355.73" r="2.64" fill="#262626" opacity="0.75"/>
<circle cx="965.82" cy="345.87" r="2.64" fill="#262626" opacity="0.75"/>
<circle cx="967.26" cy="335.62" r="2.64" fill="#262626" opacity="0.75"/>
<circle cx="973.01" cy="327.00" r="2.64" fill="#262626" opacity="0.75"/>
<circle cx="981.92" cy="321.74" r="2.64" fill="#262626" opacity="0.75"/>
<circle cx="989" cy="343.9" r="25.00" fill="none" stroke="#8a8a8a" stroke-width="2.81"/>
<path d="M988.03,343.70 L970.25,340.05" stroke="#e8e8e8" stroke-width="5.45" stroke-linecap="round"/>
<circle cx="1164.75" cy="331.75" r="19.97" fill="#000" opacity="0.55" filter="url(#blur5)"/>
<circle cx="1153" cy="343.5" r="23.5" fill="#2b2b2b"/>
<path d="M1153,343.5 L1169.62,360.12 A23.5,23.5 0 0 1 1136.38,360.12 Z" fill="#040404"/>
<circle cx="1153" cy="343.5" r="18.80" fill="#8a8a8a"/>
<circle cx="1153" cy="343.5" r="16.80" fill="url(#face)"/>
<circle cx="1155.31" cy="327.09" r="1.88" fill="#262626" opacity="0.75"/>
<circle cx="1162.20" cy="329.72" r="1.88" fill="#262626" opacity="0.75"/>
<circle cx="1167.26" cy="335.07" r="1.88" fill="#262626" opacity="0.75"/>
<circle cx="1169.51" cy="342.10" r="1.88" fill="#262626" opacity="0.75"/>
<circle cx="1168.48" cy="349.40" r="1.88" fill="#262626" opacity="0.75"/>
<circle cx="1164.39" cy="355.53" r="1.88" fill="#262626" opacity="0.75"/>
<circle cx="1158.04" cy="359.28" r="1.88" fill="#262626" opacity="0.75"/>
<circle cx="1150.69" cy="359.91" r="1.88" fill="#262626" opacity="0.75"/>
<circle cx="1143.80" cy="357.28" r="1.88" fill="#262626" opacity="0.75"/>
<circle cx="1138.74" cy="351.93" r="1.88" fill="#262626" opacity="0.75"/>
<circle cx="1136.49" cy="344.90" r="1.88" fill="#262626" opacity="0.75"/>
<circle cx="1137.52" cy="337.60" r="1.88" fill="#262626" opacity="0.75"/>
<circle cx="1141.61" cy="331.47" r="1.88" fill="#262626" opacity="0.75"/>
<circle cx="1147.96" cy="327.72" r="1.88" fill="#262626" opacity="0.75"/>
<circle cx="1153" cy="343.5" r="17.80" fill="none" stroke="#8a8a8a" stroke-width="2.00"/>
<path d="M1152.49,343.98 L1143.08,352.85" stroke="#e8e8e8" stroke-width="3.88" stroke-linecap="round"/>
<circle cx="1242.55" cy="331.75" r="19.97" fill="#000" opacity="0.55" filter="url(#blur5)"/>
<circle cx="1230.8" cy="343.5" r="23.5" fill="#2b2b2b"/>
<path d="M1230.8,343.5 L1247.42,360.12 A23.5,23.5 0 0 1 1214.18,360.12 Z" fill="#040404"/>
<path d="M1215.68,358.62 A21.39,21.39 0 0 1 1219.15,325.57" stroke="#62bef7" stroke-width="3.29" fill="none"/>
<circle cx="1230.8" cy="343.5" r="18.80" fill="#8a8a8a"/>
<circle cx="1230.8" cy="343.5" r="16.80" fill="url(#face)"/>
<circle cx="1233.11" cy="327.09" r="1.88" fill="#262626" opacity="0.75"/>
<circle cx="1240.00" cy="329.72" r="1.88" fill="#262626" opacity="0.75"/>
<circle cx="1245.06" cy="335.07" r="1.88" fill="#262626" opacity="0.75"/>
<circle cx="1247.31" cy="342.10" r="1.88" fill="#262626" opacity="0.75"/>
<circle cx="1246.28" cy="349.40" r="1.88" fill="#262626" opacity="0.75"/>
<circle cx="1242.19" cy="355.53" r="1.88" fill="#262626" opacity="0.75"/>
<circle cx="1235.84" cy="359.28" r="1.88" fill="#262626" opacity="0.75"/>
<circle cx="1228.49" cy="359.91" r="1.88" fill="#262626" opacity="0.75"/>
<circle cx="1221.60" cy="357.28" r="1.88" fill="#262626" opacity="0.75"/>
<circle cx="1216.54" cy="351.93" r="1.88" fill="#262626" opacity="0.75"/>
<circle cx="1214.29" cy="344.90" r="1.88" fill="#262626" opacity="0.75"/>
<circle cx="1215.32" cy="337.60" r="1.88" fill="#262626" opacity="0.75"/>
<circle cx="1219.41" cy="331.47" r="1.88" fill="#262626" opacity="0.75"/>
<circle cx="1225.76" cy="327.72" r="1.88" fill="#262626" opacity="0.75"/>
<circle cx="1230.8" cy="343.5" r="17.80" fill="none" stroke="#8a8a8a" stroke-width="2.00"/>
<path d="M1230.45,342.89 L1224.05,331.66" stroke="#e8e8e8" stroke-width="3.88" stroke-linecap="round"/>
<text x="414.0" y="395.8" font-family="Liberation Sans" font-size="13.52" font-weight="normal" fill="#262626" text-anchor="start" textLength="77.3" lengthAdjust="spacingAndGlyphs" >OSCILLATOR</text>
<text x="547.0" y="395.8" font-family="Liberation Sans" font-size="13.52" font-weight="normal" fill="#262626" text-anchor="start" textLength="57.1" lengthAdjust="spacingAndGlyphs" >SUB OSC</text>
<text x="666.6" y="395.8" font-family="Liberation Sans" font-size="13.52" font-weight="normal" fill="#262626" text-anchor="start" textLength="63.1" lengthAdjust="spacingAndGlyphs" >RING MOD</text>
<text x="838.0" y="395.8" font-family="Liberation Sans" font-size="13.52" font-weight="normal" fill="#262626" text-anchor="start" textLength="50.0" lengthAdjust="spacingAndGlyphs" >CUTOFF</text>
<text x="968.7" y="395.8" font-family="Liberation Sans" font-size="13.52" font-weight="normal" fill="#262626" text-anchor="start" textLength="33.9" lengthAdjust="spacingAndGlyphs" >RESO</text>
<text x="1132.4" y="384.6" font-family="Liberation Sans" font-size="11.48" font-weight="normal" fill="#262626" text-anchor="start" textLength="39.2" lengthAdjust="spacingAndGlyphs" >ATTACK</text>
<text x="1213.8" y="384.6" font-family="Liberation Sans" font-size="11.48" font-weight="normal" fill="#262626" text-anchor="start" textLength="33.0" lengthAdjust="spacingAndGlyphs" >DECAY</text>
<path d="M404.3,493.3 H952.8 Q957.8,493.3 957.8,498.3 V512.5 Q957.8,512.5 957.8,512.5 H399.3 Q399.3,512.5 399.3,512.5 V498.3 Q399.3,493.3 404.3,493.3 Z" fill="#4a4a4a"/>
<text x="631.3" y="507.1" font-family="Liberation Sans" font-size="13.37" font-weight="normal" fill="#f4f4f4" text-anchor="start" textLength="37.9" lengthAdjust="spacingAndGlyphs" >SOFT</text>
<text x="676.7" y="507.1" font-family="Liberation Sans" font-size="13.37" font-weight="normal" fill="#f4f4f4" text-anchor="start" textLength="49.1" lengthAdjust="spacingAndGlyphs" >KNOBS</text>
<rect x="346.00" y="512.00" width="665.00" height="187.50" rx="8" fill="#a6a6a6" />
<rect x="346.00" y="512.00" width="665.00" height="187.50" rx="8" fill="#fff" filter="url(#noiseW)" opacity="0.12"/>
<path d="M1056.6,493.6 H1295 Q1300,493.6 1300,498.6 V512.5 Q1300,512.5 1300,512.5 H1051.6 Q1051.6,512.5 1051.6,512.5 V498.6 Q1051.6,493.6 1056.6,493.6 Z" fill="#4a4a4a"/>
<text x="1144.0" y="507.4" font-family="Liberation Sans" font-size="13.95" font-weight="normal" fill="#f4f4f4" text-anchor="start" textLength="63.0" lengthAdjust="spacingAndGlyphs" >EFFECTS</text>
<rect x="1023.00" y="512.00" width="305.00" height="187.50" rx="8" fill="#a6a6a6" />
<rect x="1023.00" y="512.00" width="305.00" height="187.50" rx="8" fill="#fff" filter="url(#noiseW)" opacity="0.12"/>
<rect x="399.00" y="586.80" width="168.20" height="37.90" rx="10" fill="#b6b6b6" />
<rect x="429.60" y="591.00" width="128.00" height="29.50" rx="4" fill="#0a0a0a" />
<clipPath id="c4330_5945"><rect x="433.00" y="594.50" width="95.20" height="22.50" rx="2"/></clipPath><g clip-path="url(#c4330_5945)" ><rect x="433.00" y="594.50" width="95.20" height="22.50" fill="#7e828a"/><rect x="433.00" y="594.50" width="95.20" height="11.80" fill="#a7abb2"/></g>
<clipPath id="c5282_5945"><rect x="528.20" y="594.50" width="26.80" height="22.50" rx="0"/></clipPath><g clip-path="url(#c5282_5945)" ><rect x="528.20" y="594.50" width="26.80" height="22.50" fill="#1b1b1b"/><rect x="528.20" y="594.50" width="26.80" height="11.80" fill="#515151"/></g>
<path d="M535.5,602.5 H548.0 L541.7,609 Z" fill="#8a8a8a"/>
<circle cx="399.0" cy="605.5" r="25" fill="#b6b6b6"/>
<rect x="606.80" y="586.80" width="168.20" height="37.90" rx="10" fill="#b6b6b6" />
<rect x="637.40" y="591.00" width="128.00" height="29.50" rx="4" fill="#0a0a0a" />
<clipPath id="c6408_5945"><rect x="640.80" y="594.50" width="95.20" height="22.50" rx="2"/></clipPath><g clip-path="url(#c6408_5945)" ><rect x="640.80" y="594.50" width="95.20" height="22.50" fill="#7e828a"/><rect x="640.80" y="594.50" width="95.20" height="11.80" fill="#a7abb2"/></g>
<clipPath id="c7360_5945"><rect x="736.00" y="594.50" width="26.80" height="22.50" rx="0"/></clipPath><g clip-path="url(#c7360_5945)" ><rect x="736.00" y="594.50" width="26.80" height="22.50" fill="#1b1b1b"/><rect x="736.00" y="594.50" width="26.80" height="11.80" fill="#515151"/></g>
<path d="M743.3,602.5 H755.8 L749.5,609 Z" fill="#8a8a8a"/>
<circle cx="606.8" cy="605.5" r="25" fill="#b6b6b6"/>
<rect x="814.60" y="586.80" width="168.20" height="37.90" rx="10" fill="#b6b6b6" />
<rect x="845.20" y="591.00" width="128.00" height="29.50" rx="4" fill="#0a0a0a" />
<clipPath id="c8486_5945"><rect x="848.60" y="594.50" width="95.20" height="22.50" rx="2"/></clipPath><g clip-path="url(#c8486_5945)" ><rect x="848.60" y="594.50" width="95.20" height="22.50" fill="#7e828a"/><rect x="848.60" y="594.50" width="95.20" height="11.80" fill="#a7abb2"/></g>
<clipPath id="c9438_5945"><rect x="943.80" y="594.50" width="26.80" height="22.50" rx="0"/></clipPath><g clip-path="url(#c9438_5945)" ><rect x="943.80" y="594.50" width="26.80" height="22.50" fill="#1b1b1b"/><rect x="943.80" y="594.50" width="26.80" height="11.80" fill="#515151"/></g>
<path d="M951.1,602.5 H963.6 L957.3,609 Z" fill="#8a8a8a"/>
<circle cx="814.6" cy="605.5" r="25" fill="#b6b6b6"/>
<text x="436.1" y="611.0" font-family="Liberation Sans" font-size="14.10" font-weight="normal" fill="#f4f4f4" text-anchor="start" textLength="40.1" lengthAdjust="spacingAndGlyphs" >Morph</text>
<text x="644.1" y="611.0" font-family="Liberation Sans" font-size="14.10" font-weight="normal" fill="#f4f4f4" text-anchor="start" textLength="40.3" lengthAdjust="spacingAndGlyphs" >Attack</text>
<text x="852.3" y="611.0" font-family="Liberation Sans" font-size="14.10" font-weight="normal" fill="#f4f4f4" text-anchor="start" textLength="43.4" lengthAdjust="spacingAndGlyphs" >Phaser</text>
<circle cx="410.50" cy="594.00" r="19.55" fill="#000" opacity="0.55" filter="url(#blur5)"/>
<circle cx="399" cy="605.5" r="25.00" fill="#bababa" opacity="0.9" filter="url(#blur1)"/>
<circle cx="399" cy="605.5" r="23" fill="#2b2b2b"/>
<path d="M399,605.5 L415.26,621.76 A23,23 0 0 1 382.74,621.76 Z" fill="#040404"/>
<circle cx="399" cy="605.5" r="18.40" fill="#8a8a8a"/>
<circle cx="399" cy="605.5" r="16.45" fill="url(#face)"/>
<circle cx="401.26" cy="589.44" r="1.84" fill="#262626" opacity="0.75"/>
<circle cx="408.00" cy="592.01" r="1.84" fill="#262626" opacity="0.75"/>
<circle cx="412.96" cy="597.25" r="1.84" fill="#262626" opacity="0.75"/>
<circle cx="415.16" cy="604.13" r="1.84" fill="#262626" opacity="0.75"/>
<circle cx="414.15" cy="611.27" r="1.84" fill="#262626" opacity="0.75"/>
<circle cx="410.15" cy="617.28" r="1.84" fill="#262626" opacity="0.75"/>
<circle cx="403.93" cy="620.95" r="1.84" fill="#262626" opacity="0.75"/>
<circle cx="396.74" cy="621.56" r="1.84" fill="#262626" opacity="0.75"/>
<circle cx="390.00" cy="618.99" r="1.84" fill="#262626" opacity="0.75"/>
<circle cx="385.04" cy="613.75" r="1.84" fill="#262626" opacity="0.75"/>
<circle cx="382.84" cy="606.87" r="1.84" fill="#262626" opacity="0.75"/>
<circle cx="383.85" cy="599.73" r="1.84" fill="#262626" opacity="0.75"/>
<circle cx="387.85" cy="593.72" r="1.84" fill="#262626" opacity="0.75"/>
<circle cx="394.07" cy="590.05" r="1.84" fill="#262626" opacity="0.75"/>
<circle cx="399" cy="605.5" r="17.42" fill="none" stroke="#8a8a8a" stroke-width="1.96"/>
<path d="M398.45,605.92 L388.42,613.62" stroke="#e8e8e8" stroke-width="3.80" stroke-linecap="round"/>
<circle cx="618.00" cy="594.00" r="19.55" fill="#000" opacity="0.55" filter="url(#blur5)"/>
<circle cx="606.5" cy="605.5" r="25.00" fill="#bababa" opacity="0.9" filter="url(#blur1)"/>
<circle cx="606.5" cy="605.5" r="23" fill="#2b2b2b"/>
<path d="M606.5,605.5 L622.76,621.76 A23,23 0 0 1 590.24,621.76 Z" fill="#040404"/>
<circle cx="606.5" cy="605.5" r="18.40" fill="#8a8a8a"/>
<circle cx="606.5" cy="605.5" r="16.45" fill="url(#face)"/>
<circle cx="608.76" cy="589.44" r="1.84" fill="#262626" opacity="0.75"/>
<circle cx="615.50" cy="592.01" r="1.84" fill="#262626" opacity="0.75"/>
<circle cx="620.46" cy="597.25" r="1.84" fill="#262626" opacity="0.75"/>
<circle cx="622.66" cy="604.13" r="1.84" fill="#262626" opacity="0.75"/>
<circle cx="621.65" cy="611.27" r="1.84" fill="#262626" opacity="0.75"/>
<circle cx="617.65" cy="617.28" r="1.84" fill="#262626" opacity="0.75"/>
<circle cx="611.43" cy="620.95" r="1.84" fill="#262626" opacity="0.75"/>
<circle cx="604.24" cy="621.56" r="1.84" fill="#262626" opacity="0.75"/>
<circle cx="597.50" cy="618.99" r="1.84" fill="#262626" opacity="0.75"/>
<circle cx="592.54" cy="613.75" r="1.84" fill="#262626" opacity="0.75"/>
<circle cx="590.34" cy="606.87" r="1.84" fill="#262626" opacity="0.75"/>
<circle cx="591.35" cy="599.73" r="1.84" fill="#262626" opacity="0.75"/>
<circle cx="595.35" cy="593.72" r="1.84" fill="#262626" opacity="0.75"/>
<circle cx="601.57" cy="590.05" r="1.84" fill="#262626" opacity="0.75"/>
<circle cx="606.5" cy="605.5" r="17.42" fill="none" stroke="#8a8a8a" stroke-width="1.96"/>
<path d="M605.93,605.90 L595.57,613.15" stroke="#e8e8e8" stroke-width="3.80" stroke-linecap="round"/>
<circle cx="826.50" cy="594.00" r="19.55" fill="#000" opacity="0.55" filter="url(#blur5)"/>
<circle cx="815" cy="605.5" r="25.00" fill="#bababa" opacity="0.9" filter="url(#blur1)"/>
<circle cx="815" cy="605.5" r="23" fill="#2b2b2b"/>
<path d="M815,605.5 L831.26,621.76 A23,23 0 0 1 798.74,621.76 Z" fill="#040404"/>
<path d="M800.20,620.30 A20.93,20.93 0 1 1 835.85,607.32" stroke="#62bef7" stroke-width="3.22" fill="none"/>
<circle cx="815" cy="605.5" r="18.40" fill="#8a8a8a"/>
<circle cx="815" cy="605.5" r="16.45" fill="url(#face)"/>
<circle cx="817.26" cy="589.44" r="1.84" fill="#262626" opacity="0.75"/>
<circle cx="824.00" cy="592.01" r="1.84" fill="#262626" opacity="0.75"/>
<circle cx="828.96" cy="597.25" r="1.84" fill="#262626" opacity="0.75"/>
<circle cx="831.16" cy="604.13" r="1.84" fill="#262626" opacity="0.75"/>
<circle cx="830.15" cy="611.27" r="1.84" fill="#262626" opacity="0.75"/>
<circle cx="826.15" cy="617.28" r="1.84" fill="#262626" opacity="0.75"/>
<circle cx="819.93" cy="620.95" r="1.84" fill="#262626" opacity="0.75"/>
<circle cx="812.74" cy="621.56" r="1.84" fill="#262626" opacity="0.75"/>
<circle cx="806.00" cy="618.99" r="1.84" fill="#262626" opacity="0.75"/>
<circle cx="801.04" cy="613.75" r="1.84" fill="#262626" opacity="0.75"/>
<circle cx="798.84" cy="606.87" r="1.84" fill="#262626" opacity="0.75"/>
<circle cx="799.85" cy="599.73" r="1.84" fill="#262626" opacity="0.75"/>
<circle cx="803.85" cy="593.72" r="1.84" fill="#262626" opacity="0.75"/>
<circle cx="810.07" cy="590.05" r="1.84" fill="#262626" opacity="0.75"/>
<circle cx="815" cy="605.5" r="17.42" fill="none" stroke="#8a8a8a" stroke-width="1.96"/>
<path d="M815.69,605.44 L828.29,604.34" stroke="#e8e8e8" stroke-width="3.80" stroke-linecap="round"/>
<text x="371.5" y="645.0" font-family="Liberation Sans" font-size="9.45" font-weight="normal" fill="#262626" text-anchor="start" textLength="56.5" lengthAdjust="spacingAndGlyphs" >SOFT KNOB 1</text>
<text x="577.5" y="645.0" font-family="Liberation Sans" font-size="9.45" font-weight="normal" fill="#262626" text-anchor="start" textLength="60.5" lengthAdjust="spacingAndGlyphs" >SOFT KNOB 2</text>
<text x="785.7" y="645.0" font-family="Liberation Sans" font-size="9.45" font-weight="normal" fill="#262626" text-anchor="start" textLength="60.7" lengthAdjust="spacingAndGlyphs" >SOFT KNOB 3</text>
<circle cx="1108.40" cy="594.60" r="19.89" fill="#000" opacity="0.55" filter="url(#blur5)"/>
<circle cx="1096.7" cy="606.3" r="23.4" fill="#2b2b2b"/>
<path d="M1096.7,606.3 L1113.25,622.85 A23.4,23.4 0 0 1 1080.15,622.85 Z" fill="#040404"/>
<path d="M1081.64,621.36 A21.29,21.29 0 0 1 1095.96,585.02" stroke="#62bef7" stroke-width="3.28" fill="none"/>
<circle cx="1096.7" cy="606.3" r="18.72" fill="#8a8a8a"/>
<circle cx="1096.7" cy="606.3" r="16.73" fill="url(#face)"/>
<circle cx="1099.00" cy="589.96" r="1.87" fill="#262626" opacity="0.75"/>
<circle cx="1105.86" cy="592.58" r="1.87" fill="#262626" opacity="0.75"/>
<circle cx="1110.90" cy="597.91" r="1.87" fill="#262626" opacity="0.75"/>
<circle cx="1113.14" cy="604.90" r="1.87" fill="#262626" opacity="0.75"/>
<circle cx="1112.12" cy="612.17" r="1.87" fill="#262626" opacity="0.75"/>
<circle cx="1108.04" cy="618.28" r="1.87" fill="#262626" opacity="0.75"/>
<circle cx="1101.72" cy="622.01" r="1.87" fill="#262626" opacity="0.75"/>
<circle cx="1094.40" cy="622.64" r="1.87" fill="#262626" opacity="0.75"/>
<circle cx="1087.54" cy="620.02" r="1.87" fill="#262626" opacity="0.75"/>
<circle cx="1082.50" cy="614.69" r="1.87" fill="#262626" opacity="0.75"/>
<circle cx="1080.26" cy="607.70" r="1.87" fill="#262626" opacity="0.75"/>
<circle cx="1081.28" cy="600.43" r="1.87" fill="#262626" opacity="0.75"/>
<circle cx="1085.36" cy="594.32" r="1.87" fill="#262626" opacity="0.75"/>
<circle cx="1091.68" cy="590.59" r="1.87" fill="#262626" opacity="0.75"/>
<circle cx="1096.7" cy="606.3" r="17.73" fill="none" stroke="#8a8a8a" stroke-width="1.99"/>
<path d="M1096.64,605.60 L1095.61,592.77" stroke="#e8e8e8" stroke-width="3.86" stroke-linecap="round"/>
<circle cx="1187.50" cy="594.60" r="19.89" fill="#000" opacity="0.55" filter="url(#blur5)"/>
<circle cx="1175.8" cy="606.3" r="23.4" fill="#2b2b2b"/>
<path d="M1175.8,606.3 L1192.35,622.85 A23.4,23.4 0 0 1 1159.25,622.85 Z" fill="#040404"/>
<circle cx="1175.8" cy="606.3" r="18.72" fill="#8a8a8a"/>
<circle cx="1175.8" cy="606.3" r="16.73" fill="url(#face)"/>
<circle cx="1178.10" cy="589.96" r="1.87" fill="#262626" opacity="0.75"/>
<circle cx="1184.96" cy="592.58" r="1.87" fill="#262626" opacity="0.75"/>
<circle cx="1190.00" cy="597.91" r="1.87" fill="#262626" opacity="0.75"/>
<circle cx="1192.24" cy="604.90" r="1.87" fill="#262626" opacity="0.75"/>
<circle cx="1191.22" cy="612.17" r="1.87" fill="#262626" opacity="0.75"/>
<circle cx="1187.14" cy="618.28" r="1.87" fill="#262626" opacity="0.75"/>
<circle cx="1180.82" cy="622.01" r="1.87" fill="#262626" opacity="0.75"/>
<circle cx="1173.50" cy="622.64" r="1.87" fill="#262626" opacity="0.75"/>
<circle cx="1166.64" cy="620.02" r="1.87" fill="#262626" opacity="0.75"/>
<circle cx="1161.60" cy="614.69" r="1.87" fill="#262626" opacity="0.75"/>
<circle cx="1159.36" cy="607.70" r="1.87" fill="#262626" opacity="0.75"/>
<circle cx="1160.38" cy="600.43" r="1.87" fill="#262626" opacity="0.75"/>
<circle cx="1164.46" cy="594.32" r="1.87" fill="#262626" opacity="0.75"/>
<circle cx="1170.78" cy="590.59" r="1.87" fill="#262626" opacity="0.75"/>
<circle cx="1175.8" cy="606.3" r="17.73" fill="none" stroke="#8a8a8a" stroke-width="1.99"/>
<path d="M1175.27,606.76 L1165.48,615.11" stroke="#e8e8e8" stroke-width="3.86" stroke-linecap="round"/>
<circle cx="1266.40" cy="594.60" r="19.89" fill="#000" opacity="0.55" filter="url(#blur5)"/>
<circle cx="1254.7" cy="606.3" r="23.4" fill="#2b2b2b"/>
<path d="M1254.7,606.3 L1271.25,622.85 A23.4,23.4 0 0 1 1238.15,622.85 Z" fill="#040404"/>
<path d="M1239.64,621.36 A21.29,21.29 0 0 1 1242.49,588.86" stroke="#62bef7" stroke-width="3.28" fill="none"/>
<circle cx="1254.7" cy="606.3" r="18.72" fill="#8a8a8a"/>
<circle cx="1254.7" cy="606.3" r="16.73" fill="url(#face)"/>
<circle cx="1257.00" cy="589.96" r="1.87" fill="#262626" opacity="0.75"/>
<circle cx="1263.86" cy="592.58" r="1.87" fill="#262626" opacity="0.75"/>
<circle cx="1268.90" cy="597.91" r="1.87" fill="#262626" opacity="0.75"/>
<circle cx="1271.14" cy="604.90" r="1.87" fill="#262626" opacity="0.75"/>
<circle cx="1270.12" cy="612.17" r="1.87" fill="#262626" opacity="0.75"/>
<circle cx="1266.04" cy="618.28" r="1.87" fill="#262626" opacity="0.75"/>
<circle cx="1259.72" cy="622.01" r="1.87" fill="#262626" opacity="0.75"/>
<circle cx="1252.40" cy="622.64" r="1.87" fill="#262626" opacity="0.75"/>
<circle cx="1245.54" cy="620.02" r="1.87" fill="#262626" opacity="0.75"/>
<circle cx="1240.50" cy="614.69" r="1.87" fill="#262626" opacity="0.75"/>
<circle cx="1238.26" cy="607.70" r="1.87" fill="#262626" opacity="0.75"/>
<circle cx="1239.28" cy="600.43" r="1.87" fill="#262626" opacity="0.75"/>
<circle cx="1243.36" cy="594.32" r="1.87" fill="#262626" opacity="0.75"/>
<circle cx="1249.68" cy="590.59" r="1.87" fill="#262626" opacity="0.75"/>
<circle cx="1254.7" cy="606.3" r="17.73" fill="none" stroke="#8a8a8a" stroke-width="1.99"/>
<path d="M1254.34,605.70 L1247.81,594.61" stroke="#e8e8e8" stroke-width="3.86" stroke-linecap="round"/>
<text x="1065.3" y="645.8" font-family="Liberation Sans" font-size="9.59" font-weight="normal" fill="#262626" text-anchor="start" textLength="61.7" lengthAdjust="spacingAndGlyphs" >DELAY SEND</text>
<text x="1140.8" y="645.8" font-family="Liberation Sans" font-size="9.59" font-weight="normal" fill="#262626" text-anchor="start" textLength="67.9" lengthAdjust="spacingAndGlyphs" >REVERB SEND</text>
<text x="1223.7" y="645.8" font-family="Liberation Sans" font-size="9.59" font-weight="normal" fill="#262626" text-anchor="start" textLength="58.8" lengthAdjust="spacingAndGlyphs" >CHORUS MIX</text>
<rect x="345.90" y="709.00" width="981.30" height="38.50" rx="4" fill="#333333" />
<rect x="349.40" y="712.00" width="548.60" height="32.80" rx="6" fill="#8f8f8f" />
<clipPath id="c3534_7162"><rect x="353.40" y="716.20" width="540.60" height="25.00" rx="4"/></clipPath><g clip-path="url(#c3534_7162)" ><rect x="353.40" y="716.20" width="540.60" height="25.00" fill="#4b3535"/><rect x="353.40" y="716.20" width="540.60" height="12.80" fill="#5a4646"/></g>
<text x="359.8" y="734.0" font-family="Liberation Mono" font-size="15.33" font-weight="normal" fill="#d2caca" text-anchor="start" textLength="73.3" lengthAdjust="spacingAndGlyphs" >Photex MS</text>
<clipPath id="c9034_7112"><rect x="903.40" y="711.20" width="43.00" height="34.30" rx="3"/></clipPath><g clip-path="url(#c9034_7112)" ><rect x="903.40" y="711.20" width="43.00" height="34.30" fill="#6c6c6c"/><rect x="903.40" y="711.20" width="43.00" height="17.80" fill="#9b9b9b"/></g>
<clipPath id="c9516_7112"><rect x="951.60" y="711.20" width="43.00" height="34.30" rx="3"/></clipPath><g clip-path="url(#c9516_7112)" ><rect x="951.60" y="711.20" width="43.00" height="34.30" fill="#6c6c6c"/><rect x="951.60" y="711.20" width="43.00" height="17.80" fill="#9b9b9b"/></g>
<clipPath id="c10000_7112"><rect x="1000.00" y="711.20" width="103.00" height="34.30" rx="3"/></clipPath><g clip-path="url(#c10000_7112)" ><rect x="1000.00" y="711.20" width="103.00" height="34.30" fill="#6c6c6c"/><rect x="1000.00" y="711.20" width="103.00" height="17.80" fill="#9b9b9b"/></g>
<clipPath id="c11080_7112"><rect x="1108.00" y="711.20" width="103.30" height="34.30" rx="3"/></clipPath><g clip-path="url(#c11080_7112)" ><rect x="1108.00" y="711.20" width="103.30" height="34.30" fill="#6c6c6c"/><rect x="1108.00" y="711.20" width="103.30" height="17.80" fill="#9b9b9b"/></g>
<clipPath id="c12163_7112"><rect x="1216.30" y="711.20" width="106.50" height="34.30" rx="3"/></clipPath><g clip-path="url(#c12163_7112)" ><rect x="1216.30" y="711.20" width="106.50" height="34.30" fill="#6c6c6c"/><rect x="1216.30" y="711.20" width="106.50" height="17.80" fill="#9b9b9b"/></g>
<path d="M932.3,718.1 L916,728.9 L932.3,740.1 M964.8,718.1 L981.4,728.9 L964.8,740.1" stroke="#fafafa" stroke-width="4.2" fill="none"/>
<text x="1026.6" y="734.8" font-family="Liberation Sans" font-size="19.62" font-weight="normal" fill="#fafafa" text-anchor="start" textLength="49.3" lengthAdjust="spacingAndGlyphs" stroke="#fafafa" stroke-width="0.3">LOAD</text>
<text x="1133.8" y="734.8" font-family="Liberation Sans" font-size="19.62" font-weight="normal" fill="#fafafa" text-anchor="start" textLength="51.6" lengthAdjust="spacingAndGlyphs" stroke="#fafafa" stroke-width="0.3">SAVE</text>
<text x="1243.6" y="734.8" font-family="Liberation Sans" font-size="19.62" font-weight="normal" fill="#fafafa" text-anchor="start" textLength="51.0" lengthAdjust="spacingAndGlyphs" stroke="#fafafa" stroke-width="0.3">MENU</text>
<text x="345.4" y="763.6" font-family="Liberation Sans" font-size="10.76" font-weight="bold" fill="#555555" text-anchor="start" textLength="85.1" lengthAdjust="spacingAndGlyphs" >PLUG-IN VERSION:</text>
<text x="437.7" y="762.8" font-family="Liberation Sans" font-size="12.21" font-weight="normal" fill="#2196f3" text-anchor="start" textLength="28.4" lengthAdjust="spacingAndGlyphs" >1.4.1</text>
<rect x="502.30" y="752.00" width="1.20" height="14.00" rx="0" fill="#555" />
<text x="513.0" y="763.6" font-family="Liberation Sans" font-size="10.76" font-weight="bold" fill="#555555" text-anchor="start" textLength="70.1" lengthAdjust="spacingAndGlyphs" >SYNTH MODEL:</text>
<text x="587.7" y="762.8" font-family="Liberation Sans" font-size="12.21" font-weight="normal" fill="#2196f3" text-anchor="start" textLength="18.8" lengthAdjust="spacingAndGlyphs" >TI2</text>
<rect x="627.50" y="752.00" width="1.20" height="14.00" rx="0" fill="#555" />
<text x="638.2" y="763.6" font-family="Liberation Sans" font-size="10.76" font-weight="bold" fill="#555555" text-anchor="start" textLength="66.5" lengthAdjust="spacingAndGlyphs" >ROM LOADED:</text>
<text x="710.6" y="762.8" font-family="Liberation Sans" font-size="12.21" font-weight="normal" fill="#2196f3" text-anchor="start" textLength="84.4" lengthAdjust="spacingAndGlyphs" >firmware (TI2)</text>
<text x="906.0" y="763.8" font-family="Liberation Sans" font-size="10.76" font-weight="bold" fill="#555555" text-anchor="start" textLength="114.8" lengthAdjust="spacingAndGlyphs" >OPEN SOURCE PROJECT</text>
<rect x="1029.70" y="752.00" width="1.20" height="14.00" rx="0" fill="#555" />
<text x="1034.9" y="763.8" font-family="Liberation Sans" font-size="10.76" font-weight="bold" fill="#555555" text-anchor="start" textLength="58.7" lengthAdjust="spacingAndGlyphs" >DSP56K EMU</text>
<rect x="1100.70" y="752.00" width="1.20" height="14.00" rx="0" fill="#555" />
<text x="1107.1" y="763.8" font-family="Liberation Sans" font-size="10.76" font-weight="bold" fill="#555555" text-anchor="start" textLength="219.1" lengthAdjust="spacingAndGlyphs" >ADVANCED SIMULATED ANALOG SYNTHESIZER</text>
<rect x="94.00" y="125.00" width="1.00" height="648.00" rx="0" fill="#1e1e1e" />
<rect x="1342.50" y="125.00" width="1.20" height="648.00" rx="0" fill="#2a2a2a" />
<rect x="1376.00" y="125.00" width="1.00" height="648.00" rx="0" fill="#2a2a2a" />
<rect x="61.50" y="770.80" width="1316.00" height="2.00" rx="0" fill="#6e6e6e" opacity="0.7"/>
<rect x="61.50" y="772.60" width="1316.00" height="1.40" rx="0" fill="#d85050" />
<rect x="1377.00" y="125.00" width="1.00" height="649.00" rx="0" fill="#9a1414" />
<g stroke="#000" stroke-width="1.6" opacity="0.6"><path d="M1361.6,774 L1378,757.6 M1367,774 L1378,763 M1372.5,774 L1378,768.5"/></g>
<g stroke="#e8e8e8" stroke-width="1.1"><path d="M1360.6,774 L1378,756.6 M1366,774 L1378,762 M1371.5,774 L1378,767.5"/></g>
</svg>
</body></html>
